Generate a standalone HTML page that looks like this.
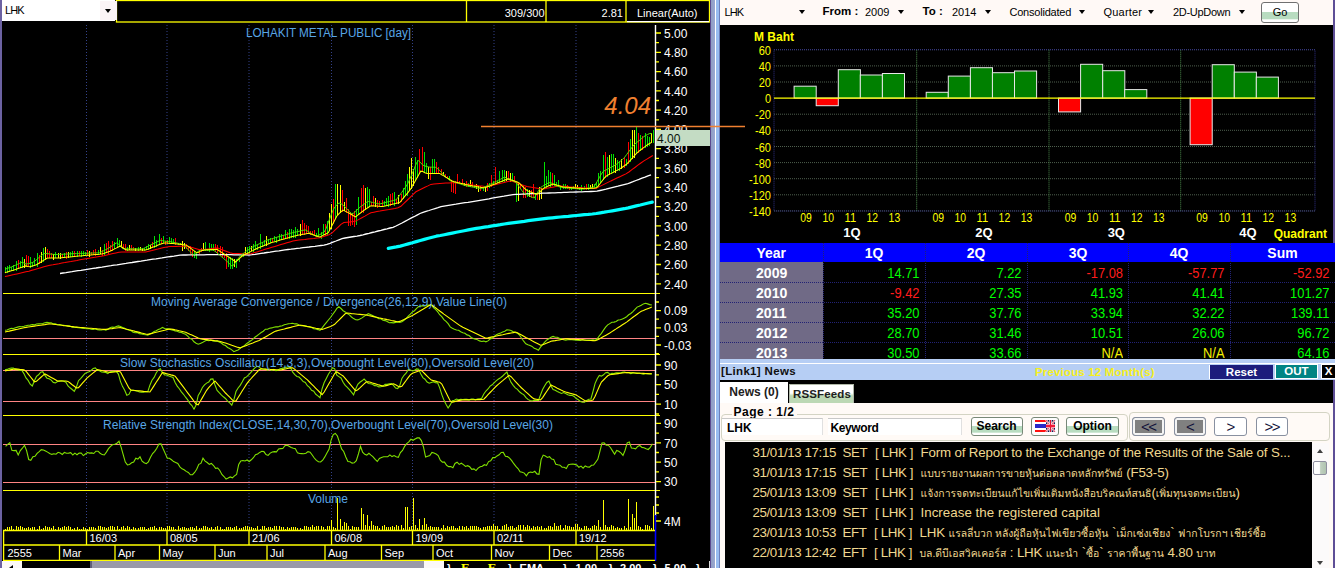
<!DOCTYPE html>
<html lang="th">
<head>
<meta charset="utf-8">
<title>LHK - LOHAKIT METAL PUBLIC</title>
<style>
html,body{margin:0;padding:0;background:#000;}
body{width:1335px;height:568px;overflow:hidden;position:relative;font-family:"Liberation Sans","Loma","Noto Sans Thai",sans-serif;font-size:11px;color:#000;}
.abs{position:absolute;}
.lsvg{position:absolute;left:0;top:0;overflow:visible;}
.bsvg{position:absolute;left:720px;top:0;}
#ledge{left:0;top:0;width:2px;height:568px;background:#6c62a2;}
#symbox{left:2px;top:0;width:113px;height:21px;background:#fff;}
#symbox span{position:absolute;left:3px;top:4px;font-size:11px;letter-spacing:-0.9px;}
.dd{position:absolute;width:0;height:0;border-left:3.5px solid transparent;border-right:3.5px solid transparent;border-top:4px solid #000;}
#symbtn{left:98px;top:1px;width:17px;height:19px;background:#fbf4f6;}
#sep{left:710px;top:0;width:10px;height:568px;background:linear-gradient(90deg,#5a4a90 0,#5a4a90 8%,#909cc4 10%,#98a8d0 48%,#ffffff 52%,#ffffff 61%,#98bcf0 64%,#98bcf0 94%,#404080 96%,#404080 100%);}
#redge{left:1333px;top:0;width:2px;height:568px;background:#5e4e96;}
#tb{left:720px;top:0;width:613px;height:25px;background:#fff9f6;}
#tb span{position:absolute;top:6px;font-size:11px;white-space:nowrap;}
#tb b{position:absolute;top:5px;font-size:11.5px;white-space:nowrap;}
#go{position:absolute;left:541px;top:1.8px;width:36px;height:19px;border:1px solid #707070;border-radius:3px;background:linear-gradient(#fff 0,#fff 46%,#b8dcc0 50%,#b8dcc0 84%,#fff 88%,#fff 100%);text-align:center;line-height:19px;font-size:11px;}
/* table */
#tbl{left:720px;top:242.5px;width:615px;height:117px;background:#000;}
#tbl .hd{position:absolute;left:0;top:0;width:615px;height:19.5px;background:#0000ff;}
#tbl .hd b{position:absolute;top:1px;font-size:15px;transform:scaleX(0.93);color:#fff;text-align:center;line-height:18px;}
#tbl .yr{position:absolute;left:0;width:102.5px;height:20px;background:#706a86;color:#fff;font-weight:bold;font-size:15px;text-align:center;line-height:21px;}
#tbl .yr span{display:inline-block;transform:scaleX(0.94);}
#tbl .v{position:absolute;font-size:15px;text-align:right;line-height:21px;height:20px;transform:scaleX(0.86);transform-origin:right center;}
.g{color:#00ff00;}.r{color:#ff1c1c;}.n{color:#f4f000;}
#tbl .hl{position:absolute;left:0;width:615px;height:0;border-top:1px dotted #222274;}
#tbl .vl{position:absolute;top:0;height:117px;width:0;border-left:1px dotted #222274;}
/* link bar */
#lbar{left:720px;top:359px;width:615px;height:21.3px;background:#b6cef4;}
#lbar:before{content:'';position:absolute;left:0;top:4px;width:615px;height:1px;background:#fff;}
#lbar .t{position:absolute;left:1px;top:5.5px;font-weight:bold;font-size:11.5px;color:#101010;letter-spacing:0.33px;white-space:nowrap;}
#lbar .p{position:absolute;left:315px;top:6.5px;font-weight:bold;font-size:11.5px;color:#f6f020;white-space:nowrap;letter-spacing:0.17px;}
#reset{position:absolute;left:490px;top:6px;width:63px;height:14px;border-left:1px solid #fff;margin-left:-1px;background:#1c1c7c;color:#fff;font-weight:bold;font-size:11.5px;text-align:center;line-height:14px;}
#out{position:absolute;left:555px;top:5.3px;width:41px;height:13px;background:#008484;border:1px solid #fff;color:#fff;font-weight:bold;font-size:11.5px;text-align:center;line-height:13.5px;}
#xb{position:absolute;left:600.5px;top:5.3px;width:14px;height:13px;background:#000;border:1px solid #fff;color:#fff;font-weight:bold;font-size:11.5px;text-align:center;line-height:13.5px;}
/* tabs */
#tab1{left:720px;top:381.5px;width:68px;height:22px;background:#fff;font-weight:bold;font-size:12px;color:#202020;text-align:center;line-height:21px;}
#tab2{left:788.5px;top:384px;width:65px;height:19px;border:1px solid #b0b8a8;border-bottom:none;box-sizing:border-box;background:linear-gradient(#fff 0,#fff 45%,#bcd8b4 60%,#bcd8b4 100%);font-weight:bold;font-size:11.5px;color:#202020;text-align:center;line-height:19px;letter-spacing:0.15px;padding-left:2px;}
#pnl{left:720px;top:402.5px;width:613px;height:39.5px;background:#fffaf6;}
.gb{position:absolute;border:1px solid #d4d4c4;border-radius:4px;}
#pg{position:absolute;left:11.5px;top:3px;background:#fffaf6;font-weight:bold;font-size:12px;padding:0 2px;line-height:12px;letter-spacing:0.5px;white-space:nowrap;}
.inp{position:absolute;top:15px;height:17.5px;background:#fff;border-top:1px solid #c8c8c8;border-right:1px solid #e0e0e0;font-weight:bold;font-size:12px;line-height:18px;box-sizing:border-box;}
.btn{position:absolute;top:14.6px;height:18.8px;border:1px solid #788878;border-radius:3px;box-sizing:border-box;background:linear-gradient(#fff 0,#fff 46%,#b8dcc0 50%,#b8dcc0 84%,#fff 88%,#fff 100%);font-weight:bold;font-size:12px;text-align:center;line-height:17.5px;}
.nb{position:absolute;top:14.6px;height:18.6px;width:32.5px;border:1px solid #8890a0;border-radius:3px;box-sizing:border-box;background:#fff;font-weight:normal;font-size:15px;letter-spacing:-1.5px;color:#101038;text-align:center;line-height:17px;}
.nb.gy{background:#808080;box-shadow:inset 0 0 0 2px #f4f4f4;}
/* news */
#nwrap{left:720px;top:441.5px;width:613px;height:127px;background:#fffaf6;}
#news{left:724.5px;top:441.7px;width:587px;height:126.3px;background:#000;color:#f0d890;font-size:13.33px;white-space:nowrap;overflow:hidden;}
#news div{position:absolute;left:28px;height:20px;line-height:20px;}
#news div span{position:absolute;top:0;}
#news i{font-style:normal;font-size:10.4px;letter-spacing:0;}
#sb{left:1311.5px;top:442.5px;width:17px;height:125.5px;background:#fcfafa;}
#sb i{position:absolute;left:5px;width:0;height:0;border-left:3.5px solid transparent;border-right:3.5px solid transparent;}
#thumb{position:absolute;left:1px;top:18.5px;width:14px;height:14px;border:1px solid #9090a0;border-radius:2px;box-sizing:border-box;background:linear-gradient(90deg,#fff 0,#fff 45%,#c0d0c0 55%,#b0c4b0 100%);}
/* bottom scrollbar */
#hsb{left:2px;top:561px;width:708px;height:7px;background:#000;overflow:hidden;}
</style>
</head>
<body>
<svg class="lsvg" width="720" height="568" viewBox="0 0 720 568" font-family="Liberation Sans, Arial, sans-serif">
<line x1="86.5" y1="25" x2="86.5" y2="530" stroke="#34428a" stroke-width="1" stroke-dasharray="1,2"/>
<line x1="167" y1="25" x2="167" y2="530" stroke="#34428a" stroke-width="1" stroke-dasharray="1,2"/>
<line x1="249" y1="25" x2="249" y2="530" stroke="#34428a" stroke-width="1" stroke-dasharray="1,2"/>
<line x1="331.5" y1="25" x2="331.5" y2="530" stroke="#34428a" stroke-width="1" stroke-dasharray="1,2"/>
<line x1="412.5" y1="25" x2="412.5" y2="530" stroke="#34428a" stroke-width="1" stroke-dasharray="1,2"/>
<line x1="494" y1="25" x2="494" y2="530" stroke="#34428a" stroke-width="1" stroke-dasharray="1,2"/>
<line x1="576" y1="25" x2="576" y2="530" stroke="#34428a" stroke-width="1" stroke-dasharray="1,2"/>
<line x1="3" y1="293.5" x2="660" y2="293.5" stroke="#ffff00" stroke-width="1.2"/>
<line x1="3" y1="354.5" x2="660" y2="354.5" stroke="#ffff00" stroke-width="1.2"/>
<line x1="3" y1="415.5" x2="660" y2="415.5" stroke="#ffff00" stroke-width="1.2"/>
<line x1="3" y1="490.5" x2="660" y2="490.5" stroke="#ffff00" stroke-width="1.2"/>
<line x1="3" y1="338.5" x2="655" y2="338.5" stroke="#ff8484" stroke-width="1"/>
<line x1="3" y1="370.5" x2="655" y2="370.5" stroke="#ff8484" stroke-width="1"/>
<line x1="3" y1="401.5" x2="655" y2="401.5" stroke="#ff8484" stroke-width="1"/>
<line x1="3" y1="444.5" x2="655" y2="444.5" stroke="#ff8484" stroke-width="1"/>
<line x1="3" y1="482.5" x2="655" y2="482.5" stroke="#ff8484" stroke-width="1"/>
<path d="M5.5 266.8V273.0M7.5 265.6V272.9M9.5 265.3V271.0M11.5 266.7V271.3M13.5 264.7V271.2M16.5 260.7V271.4M20.5 260.9V267.9M22.5 257.0V268.0M30.5 256.6V267.9M32.5 262.2V266.5M34.5 258.2V265.0M37.5 252.6V266.5M43.5 248.4V261.9M55.5 252.2V258.4M64.5 253.3V258.3M70.5 251.6V256.5M72.5 251.3V257.0M77.5 251.0V257.3M81.5 251.3V256.5M83.5 250.6V256.0M85.5 252.0V255.1M98.5 249.9V254.5M104.5 243.8V255.4M114.5 241.8V249.3M117.5 238.1V248.4M119.5 239.8V246.7M127.5 246.7V250.6M138.5 246.6V250.8M144.5 248.0V250.9M146.5 246.0V250.1M148.5 243.9V250.1M154.5 235.8V247.9M156.5 240.0V246.7M159.5 233.8V244.8M163.5 235.9V243.2M169.5 237.4V243.2M171.5 238.2V243.4M173.5 239.0V244.4M178.5 243.0V245.4M194.5 250.6V257.6M196.5 251.7V258.5M205.5 242.3V250.7M207.5 249.2V251.4M209.5 242.9V251.8M211.5 243.6V250.3M213.5 244.2V250.8M228.5 257.5V267.3M230.5 257.0V268.5M232.5 257.7V268.7M236.5 258.9V268.4M239.5 258.6V261.7M241.5 254.3V257.1M243.5 252.7V256.9M247.5 246.5V254.5M249.5 246.3V253.7M253.5 243.7V251.5M255.5 240.7V249.9M257.5 244.6V250.2M260.5 234.2V248.9M262.5 242.2V246.6M264.5 239.8V245.6M268.5 238.7V244.1M270.5 238.2V242.7M274.5 235.9V241.3M276.5 236.6V243.0M279.5 234.3V241.0M281.5 233.9V240.4M285.5 230.0V238.8M289.5 228.7V238.5M291.5 228.7V238.1M293.5 229.5V237.6M295.5 227.2V237.6M297.5 229.2V235.6M316.5 233.3V237.1M318.5 227.5V236.7M321.5 232.0V238.5M323.5 224.0V235.1M327.5 220.6V235.0M335.5 183.6V219.0M356.5 208.9V225.4M358.5 197.4V215.1M367.5 186.6V208.0M369.5 188.9V207.3M384.5 200.7V206.4M386.5 197.8V205.9M388.5 196.1V206.6M394.5 191.5V205.7M403.5 188.3V198.7M405.5 181.3V196.1M407.5 173.6V195.8M415.5 157.0V180.7M417.5 160.2V177.6M424.5 151.6V172.1M426.5 163.2V172.8M432.5 158.5V173.2M434.5 159.1V173.8M449.5 175.8V180.2M468.5 182.9V186.7M474.5 184.6V187.0M483.5 187.6V191.4M489.5 182.9V188.3M493.5 180.6V184.6M497.5 180.5V183.2M499.5 170.8V184.0M502.5 170.2V181.6M504.5 169.6V182.3M512.5 173.0V181.1M516.5 181.6V201.5M527.5 189.0V197.0M535.5 193.9V199.6M544.5 162.3V189.4M546.5 176.0V188.0M548.5 170.1V186.4M550.5 172.1V187.0M554.5 175.2V186.3M556.5 181.6V186.7M558.5 180.0V187.2M560.5 185.5V189.9M563.5 184.0V188.8M565.5 183.6V188.6M571.5 187.4V189.8M573.5 185.9V188.9M579.5 188.2V190.2M581.5 185.3V190.5M584.5 185.8V189.2M588.5 184.2V189.8M594.5 184.2V189.2M596.5 181.7V188.5M598.5 173.2V186.5M600.5 171.2V183.4M603.5 154.5V180.4M607.5 156.5V177.0M611.5 154.4V174.1M613.5 154.1V172.4M617.5 160.1V171.0M619.5 160.9V170.5M626.5 159.0V166.1M630.5 139.3V162.1M636.5 127.3V154.3M640.5 134.8V150.9M645.5 133.2V147.7M647.5 136.0V146.5M649.5 136.5V145.8M653.5 130.0V142.9" stroke="#00e000" stroke-width="1" fill="none" shape-rendering="crispEdges"/>
<path d="M18.5 259.6V268.5M26.5 255.3V266.5M28.5 255.8V266.5M39.5 255.4V264.4M47.5 248.9V258.1M49.5 251.0V257.8M51.5 252.7V257.7M62.5 253.7V258.1M66.5 251.9V259.0M74.5 251.1V256.2M79.5 251.0V256.4M87.5 250.1V256.2M91.5 251.7V254.9M93.5 249.7V255.1M95.5 249.1V256.2M102.5 249.5V256.0M106.5 242.8V252.7M108.5 240.6V253.5M110.5 244.6V250.8M112.5 241.3V251.4M123.5 244.3V249.2M125.5 244.1V251.2M131.5 245.1V250.1M133.5 247.2V250.4M152.5 241.9V248.1M161.5 238.0V243.9M165.5 240.6V244.8M167.5 240.0V243.7M175.5 238.2V244.8M186.5 244.4V248.8M188.5 245.6V251.1M190.5 246.1V253.5M192.5 249.6V257.2M199.5 250.2V253.8M201.5 248.2V251.7M215.5 243.7V252.4M217.5 245.0V253.7M220.5 246.2V255.8M222.5 246.9V257.0M224.5 253.8V258.2M226.5 252.7V268.5M272.5 237.7V242.3M283.5 234.8V239.1M287.5 232.1V238.5M302.5 220.3V234.5M304.5 223.0V234.9M306.5 224.5V234.4M308.5 226.1V233.7M310.5 230.8V234.8M312.5 230.7V235.1M314.5 229.5V234.9M325.5 224.4V235.5M333.5 198.7V223.8M342.5 190.2V211.5M346.5 198.0V213.2M348.5 208.9V226.4M350.5 212.9V226.3M352.5 213.2V225.4M354.5 210.5V226.6M361.5 187.7V212.6M363.5 184.5V213.0M371.5 201.8V206.0M373.5 195.6V205.8M377.5 199.5V207.9M379.5 200.7V205.8M382.5 200.2V206.0M390.5 194.0V206.2M392.5 193.3V203.9M396.5 199.2V204.1M401.5 194.1V201.9M419.5 148.5V173.5M422.5 147.4V171.3M430.5 167.1V179.7M436.5 162.0V174.4M438.5 166.7V173.7M441.5 168.7V174.0M445.5 174.4V177.0M447.5 175.8V178.0M451.5 181.2V192.4M453.5 181.7V192.8M455.5 181.4V193.8M457.5 173.8V183.2M459.5 180.5V184.4M462.5 179.4V184.2M466.5 180.5V187.3M472.5 181.9V186.8M480.5 186.0V191.0M487.5 183.1V191.1M491.5 175.0V187.4M495.5 167.0V184.3M508.5 171.1V179.4M514.5 175.8V182.4M520.5 184.2V189.2M523.5 185.9V197.8M525.5 187.0V197.7M531.5 189.5V198.4M533.5 184.3V198.2M537.5 192.6V200.1M552.5 172.9V185.8M567.5 184.7V189.2M569.5 188.0V190.4M586.5 184.3V189.5M605.5 152.4V177.7M624.5 156.8V168.0M628.5 142.2V164.2M638.5 132.7V152.5M642.5 135.8V149.8" stroke="#ff0000" stroke-width="1" fill="none" shape-rendering="crispEdges"/>
<path d="M24.5 258.5V267.6M41.5 251.6V262.8M45.5 247.0V259.9M53.5 253.6V259.5M58.5 252.9V257.9M60.5 252.6V258.9M68.5 251.8V257.6M89.5 250.9V256.8M100.5 246.7V253.8M121.5 240.7V246.3M129.5 244.9V250.1M135.5 247.5V250.6M140.5 246.9V249.5M142.5 247.5V251.3M150.5 244.6V249.4M180.5 243.0V245.2M182.5 241.4V250.6M184.5 243.4V249.1M203.5 242.6V250.5M234.5 258.5V267.3M245.5 246.8V255.2M251.5 245.7V251.0M266.5 236.2V246.4M300.5 223.5V236.1M329.5 213.1V231.3M331.5 204.4V229.2M337.5 184.1V215.0M340.5 184.9V212.9M344.5 201.8V210.7M365.5 187.6V210.2M375.5 198.2V206.5M398.5 195.1V204.2M409.5 167.1V190.9M411.5 158.4V189.0M413.5 169.3V185.8M428.5 167.1V179.1M443.5 171.7V175.0M464.5 183.0V186.4M470.5 180.4V186.6M476.5 183.6V189.4M478.5 186.2V191.6M485.5 187.1V192.0M506.5 170.9V181.1M510.5 173.1V181.5M518.5 183.3V201.3M529.5 190.1V197.0M539.5 187.2V199.9M541.5 187.7V199.0M575.5 183.8V189.2M577.5 184.5V189.3M590.5 184.5V188.6M592.5 184.0V189.0M609.5 155.2V175.0M615.5 158.3V172.8M621.5 159.1V169.1M632.5 130.1V159.1M634.5 130.0V158.0M651.5 133.3V143.3" stroke="#ffff00" stroke-width="1" fill="none" shape-rendering="crispEdges"/>
<polyline points="388.3,248.4 392.3,247.6 396.3,246.9 400.3,246.1 404.3,245.0 408.3,243.9 412.3,242.8 416.3,241.6 420.3,240.5 424.3,239.4 428.3,238.3 432.3,237.2 436.3,236.2 440.3,235.5 444.3,234.7 448.3,233.9 452.3,233.1 456.3,232.3 460.3,231.5 464.3,230.7 468.3,229.9 472.3,229.1 476.3,228.4 480.3,227.8 484.3,227.2 488.3,226.6 492.3,225.9 496.3,225.3 500.3,224.7 504.3,224.0 508.3,223.4 512.3,222.8 516.3,222.3 520.3,221.8 524.3,221.3 528.3,220.7 532.3,220.2 536.3,219.7 540.3,219.2 544.3,218.7 548.3,218.2 552.3,217.8 556.3,217.4 560.3,217.0 564.3,216.6 568.3,216.3 572.3,215.9 576.3,215.5 580.3,215.1 584.3,214.7 588.3,214.4 592.3,214.0 596.3,213.5 600.3,212.8 604.3,212.2 608.3,211.5 612.3,210.8 616.3,210.1 620.3,209.4 624.3,208.7 628.3,207.9 632.3,206.9 636.3,205.9 640.3,205.0 644.3,204.0 648.3,203.0 652.3,202.1" fill="none" stroke="#00ffff" stroke-width="3.2" stroke-linejoin="round" stroke-linecap="round"/>
<polyline points="60.0,273.5 63.0,273.0 66.0,272.6 69.0,272.1 72.0,271.7 75.0,271.2 78.0,270.7 81.0,270.3 84.0,269.8 87.0,269.4 90.0,268.9 93.0,268.4 96.0,268.0 99.0,267.5 102.0,267.1 105.0,266.6 108.0,266.1 111.0,265.7 114.0,265.2 117.0,264.8 120.0,264.3 123.0,263.8 126.0,263.4 129.0,262.9 132.0,262.5 135.0,262.0 138.0,261.5 141.0,261.1 144.0,260.6 147.0,260.2 150.0,259.7 153.0,259.2 156.0,258.8 159.0,258.3 162.0,257.9 165.0,257.4 168.0,256.9 171.0,256.5 174.0,256.1 177.0,255.6 180.0,255.2 183.0,255.0 186.0,255.0 189.0,254.9 192.0,254.9 195.0,254.9 198.0,254.8 201.0,254.8 204.0,254.8 207.0,254.7 210.0,254.7 213.0,254.7 216.0,254.7 219.0,254.6 222.0,254.6 225.0,254.6 228.0,254.7 231.0,254.7 234.0,254.8 237.0,254.8 240.0,254.9 243.0,254.9 246.0,254.9 249.0,255.0 252.0,254.7 255.0,254.3 258.0,253.8 261.0,253.4 264.0,253.0 267.0,252.5 270.0,252.1 273.0,251.6 276.0,251.2 279.0,250.8 282.0,250.3 285.0,249.9 288.0,249.5 291.0,249.2 294.0,248.8 297.0,248.4 300.0,248.1 303.0,247.7 306.0,247.3 309.0,247.0 312.0,246.6 315.0,246.3 318.0,245.9 321.0,245.5 324.0,245.2 327.0,244.4 330.0,243.3 333.0,242.1 336.0,241.0 339.0,239.8 342.0,238.7 345.0,238.0 348.0,237.5 351.0,237.0 354.0,236.5 357.0,236.1 360.0,235.5 363.0,234.8 366.0,234.0 369.0,233.3 372.0,232.5 375.0,231.8 378.0,231.0 381.0,230.3 384.0,229.5 387.0,228.8 390.0,228.0 393.0,227.3 396.0,226.0 399.0,224.5 402.0,223.0 405.0,221.4 408.0,219.8 411.0,218.2 414.0,216.7 417.0,215.1 420.0,213.5 423.0,212.4 426.0,211.4 429.0,210.5 432.0,209.5 435.0,208.6 438.0,207.7 441.0,206.7 444.0,206.1 447.0,205.6 450.0,205.1 453.0,204.6 456.0,204.2 459.0,203.7 462.0,203.2 465.0,202.7 468.0,202.3 471.0,201.8 474.0,201.3 477.0,200.8 480.0,200.3 483.0,199.8 486.0,199.3 489.0,198.8 492.0,198.2 495.0,197.7 498.0,197.2 501.0,196.7 504.0,196.2 507.0,195.6 510.0,195.1 513.0,194.6 516.0,194.4 519.0,194.3 522.0,194.1 525.0,194.0 528.0,193.9 531.0,193.7 534.0,193.6 537.0,193.5 540.0,193.3 543.0,193.2 546.0,193.1 549.0,193.0 552.0,192.9 555.0,192.8 558.0,192.7 561.0,192.6 564.0,192.4 567.0,192.3 570.0,192.2 573.0,192.1 576.0,192.0 579.0,191.9 582.0,191.8 585.0,191.7 588.0,191.6 591.0,191.5 594.0,191.4 597.0,191.2 600.0,190.5 603.0,189.8 606.0,189.1 609.0,188.3 612.0,187.6 615.0,186.9 618.0,186.2 621.0,185.4 624.0,184.7 627.0,184.0 630.0,182.8 633.0,181.7 636.0,180.5 639.0,179.4 642.0,178.2 645.0,177.1 648.0,175.9 651.0,174.8" fill="none" stroke="#ffffff" stroke-width="1.3" />
<polyline points="4.9,276.6 7.9,275.9 10.9,275.2 13.9,274.6 16.9,273.9 19.9,273.2 22.9,272.5 25.9,271.8 28.9,271.2 31.9,270.3 34.9,269.4 37.9,268.6 40.9,267.7 43.9,266.8 46.9,265.9 49.9,265.3 52.9,264.8 55.9,264.2 58.9,263.7 61.9,263.1 64.9,262.6 67.9,262.0 70.9,261.5 73.9,260.9 76.9,260.4 79.9,259.8 82.9,259.3 85.9,258.8 88.9,258.3 91.9,257.8 94.9,257.3 97.9,256.8 100.9,256.3 103.9,255.7 106.9,255.0 109.9,254.3 112.9,253.6 115.9,252.9 118.9,252.3 121.9,252.0 124.9,252.0 127.9,252.0 130.9,252.0 133.9,252.0 136.9,252.0 139.9,252.0 142.9,252.0 145.9,252.0 148.9,251.3 151.9,250.6 154.9,249.8 157.9,249.1 160.9,248.3 163.9,247.6 166.9,246.9 169.9,246.6 172.9,246.5 175.9,246.4 178.9,246.3 181.9,246.2 184.9,246.1 187.9,246.4 190.9,247.2 193.9,248.1 196.9,248.9 199.9,249.7 202.9,249.7 205.9,249.3 208.9,248.9 211.9,248.5 214.9,248.1 217.9,248.1 220.9,249.3 223.9,250.4 226.9,251.6 229.9,252.7 232.9,253.4 235.9,253.5 238.9,253.6 241.9,253.7 244.9,253.8 247.9,253.9 250.9,253.7 253.9,252.8 256.9,251.9 259.9,251.0 262.9,250.1 265.9,249.1 268.9,248.2 271.9,247.3 274.9,246.4 277.9,245.5 280.9,244.6 283.9,243.7 286.9,242.8 289.9,241.9 292.9,241.0 295.9,240.5 298.9,240.1 301.9,239.8 304.9,239.5 307.9,239.1 310.9,238.8 313.9,238.5 316.9,238.1 319.9,237.8 322.9,236.7 325.9,235.7 328.9,234.7 331.9,233.1 334.9,230.2 337.9,227.3 340.9,224.4 343.9,222.6 346.9,222.2 349.9,221.9 352.9,221.6 355.9,221.1 358.9,219.4 361.9,217.7 364.9,216.1 367.9,214.4 370.9,212.8 373.9,212.2 376.9,211.6 379.9,211.1 382.9,210.5 385.9,210.0 388.9,209.5 391.9,208.9 394.9,208.4 397.9,207.8 400.9,206.3 403.9,203.4 406.9,200.5 409.9,197.6 412.9,194.6 415.9,191.8 418.9,190.3 421.9,188.8 424.9,187.3 427.9,185.9 430.9,184.4 433.9,183.9 436.9,183.7 439.9,183.5 442.9,183.3 445.9,183.1 448.9,182.9 451.9,182.7 454.9,182.8 457.9,183.2 460.9,183.5 463.9,183.9 466.9,184.2 469.9,184.6 472.9,185.0 475.9,185.3 478.9,185.7 481.9,186.0 484.9,186.4 487.9,186.4 490.9,185.6 493.9,184.9 496.9,184.2 499.9,183.4 502.9,182.7 505.9,181.9 508.9,181.2 511.9,181.1 514.9,182.2 517.9,183.3 520.9,184.4 523.9,185.6 526.9,186.6 529.9,187.1 532.9,187.6 535.9,188.1 538.9,188.6 541.9,189.1 544.9,188.7 547.9,188.1 550.9,187.5 553.9,186.9 556.9,186.3 559.9,186.1 562.9,186.3 565.9,186.5 568.9,186.8 571.9,187.0 574.9,187.2 577.9,187.4 580.9,187.6 583.9,187.9 586.9,188.1 589.9,188.3 592.9,188.5 595.9,188.4 598.9,186.9 601.9,185.4 604.9,183.9 607.9,182.4 610.9,180.9 613.9,179.5 616.9,178.1 619.9,176.7 622.9,175.3 625.9,173.9 628.9,172.0 631.9,169.7 634.9,167.5 637.9,165.2 640.9,163.0 643.9,160.9 646.9,159.1 649.9,157.3 652.9,155.5" fill="none" stroke="#ff0000" stroke-width="1.05" />
<polyline points="5.0,269.2 7.1,268.5 9.2,267.7 11.3,267.0 13.4,266.1 15.5,265.2 17.6,264.3 19.7,263.3 21.8,262.4 23.9,262.9 26.0,264.1 28.1,263.8 30.2,263.2 32.3,262.6 34.4,261.4 36.5,259.6 38.6,257.9 40.7,256.1 42.8,254.4 44.9,253.4 47.0,253.6 49.1,253.9 51.2,254.1 53.3,254.3 55.4,254.6 57.5,254.5 59.6,254.4 61.7,254.3 63.8,254.2 65.9,254.1 68.0,254.0 70.1,253.9 72.2,253.8 74.3,253.7 76.4,253.6 78.5,253.5 80.6,253.4 82.7,253.4 84.8,253.3 86.9,253.2 89.0,253.2 91.1,253.1 93.2,253.0 95.3,252.9 97.4,252.9 99.5,252.7 101.6,251.7 103.7,250.7 105.8,249.7 107.9,248.6 110.0,247.2 112.1,245.8 114.2,244.4 116.3,243.0 118.4,243.9 120.5,246.2 122.6,248.6 124.7,248.8 126.8,248.8 128.9,248.8 131.0,248.8 133.1,248.8 135.2,248.8 137.3,248.8 139.4,248.8 141.5,248.8 143.6,248.4 145.7,247.4 147.8,246.3 149.9,245.3 152.0,244.3 154.1,243.3 156.2,242.3 158.3,241.3 160.4,240.3 162.5,240.7 164.6,241.1 166.7,241.3 168.8,241.6 170.9,241.8 173.0,242.3 175.1,242.7 177.2,243.1 179.3,243.6 181.4,244.0 183.5,244.7 185.6,246.9 187.7,249.1 189.8,251.3 191.9,253.5 194.0,255.3 196.1,253.2 198.2,251.3 200.3,250.2 202.4,250.2 204.5,250.2 206.6,250.2 208.7,250.2 210.8,250.2 212.9,250.2 215.0,251.2 217.1,253.0 219.2,254.7 221.3,256.5 223.4,258.3 225.5,260.1 227.6,261.8 229.7,263.9 231.8,266.1 233.9,264.8 236.0,261.8 238.1,258.7 240.2,256.1 242.3,254.3 244.4,252.6 246.5,250.9 248.6,249.5 250.7,248.2 252.8,246.9 254.9,245.8 257.0,244.9 259.1,243.9 261.2,243.0 263.3,242.0 265.4,241.0 267.5,240.1 269.6,239.4 271.7,238.8 273.8,238.2 275.9,237.5 278.0,236.9 280.1,236.3 282.2,235.7 284.3,235.1 286.4,234.5 288.5,233.9 290.6,233.2 292.7,232.7 294.8,232.2 296.9,231.8 299.0,231.3 301.1,230.8 303.2,230.3 305.3,229.9 307.4,231.1 309.5,232.4 311.6,233.6 313.7,234.8 315.8,236.1 317.9,235.7 320.0,234.5 322.1,233.2 324.2,232.0 326.3,228.1 328.4,222.1 330.5,216.6 332.6,211.2 334.7,207.1 336.8,205.1 338.9,203.0 341.0,203.6 343.1,205.3 345.2,207.1 347.3,209.2 349.4,211.4 351.5,213.6 353.6,213.2 355.7,211.2 357.8,209.2 359.9,207.3 362.0,205.7 364.1,204.1 366.2,202.5 368.3,201.5 370.4,201.9 372.5,202.4 374.6,202.9 376.7,203.4 378.8,203.9 380.9,203.7 383.0,203.1 385.1,202.6 387.2,202.0 389.3,201.5 391.4,201.0 393.5,200.4 395.6,199.9 397.7,198.0 399.8,195.1 401.9,192.2 404.0,189.3 406.1,186.4 408.2,182.8 410.3,178.0 412.4,173.3 414.5,168.0 416.6,162.6 418.7,160.6 420.8,162.9 422.9,165.2 425.0,166.0 427.1,166.6 429.2,167.1 431.3,167.2 433.4,167.2 435.5,167.3 437.6,168.6 439.7,170.6 441.8,172.7 443.9,174.8 446.0,176.9 448.1,179.0 450.2,180.7 452.3,181.4 454.4,182.1 456.5,182.8 458.6,183.4 460.7,184.1 462.8,184.8 464.9,185.5 467.0,186.0 469.1,186.4 471.2,186.8 473.3,187.2 475.4,187.7 477.5,188.1 479.6,188.5 481.7,188.6 483.8,187.2 485.9,186.3 488.0,185.3 490.1,184.4 492.2,183.4 494.3,182.4 496.4,181.3 498.5,180.2 500.6,179.2 502.7,178.1 504.8,177.0 506.9,178.4 509.0,179.5 511.1,180.3 513.2,181.1 515.3,181.9 517.4,184.4 519.5,187.3 521.6,190.2 523.7,192.9 525.8,194.0 527.9,195.1 530.0,196.1 532.1,197.2 534.2,198.0 536.3,194.5 538.4,190.9 540.5,187.6 542.6,186.2 544.7,185.0 546.8,183.8 548.9,182.7 551.0,182.8 553.1,184.0 555.2,185.2 557.3,186.1 559.4,186.9 561.5,187.5 563.6,187.6 565.7,187.8 567.8,188.0 569.9,188.2 572.0,188.3 574.1,188.5 576.2,188.7 578.3,188.9 580.4,189.1 582.5,189.0 584.6,188.7 586.7,188.4 588.8,188.1 590.9,187.8 593.0,187.7 595.1,185.0 597.2,181.4 599.3,177.7 601.4,174.0 603.5,171.2 605.6,170.2 607.7,169.1 609.8,168.0 611.9,166.9 614.0,165.7 616.1,164.5 618.2,162.9 620.3,161.2 622.4,159.5 624.5,157.4 626.6,154.6 628.7,151.8 630.8,149.0 632.9,146.2 635.0,143.8 637.1,142.2 639.2,140.6 641.3,138.8 643.4,137.0 645.5,135.5 647.6,134.5 649.7,133.5 651.8,133.5" fill="none" stroke="#50e000" stroke-width="1.0" />
<polyline points="4.9,272.7 7.0,272.1 9.1,271.4 11.2,270.8 13.3,270.2 15.4,269.5 17.5,268.7 19.6,268.0 21.7,267.2 23.8,266.4 25.9,265.9 28.0,266.4 30.1,266.7 32.2,266.0 34.3,265.4 36.4,264.8 38.5,263.5 40.6,262.2 42.7,260.9 44.8,259.6 46.9,258.3 49.0,258.0 51.1,258.0 53.2,258.0 55.3,258.0 57.4,258.0 59.5,257.9 61.6,257.7 63.7,257.5 65.8,257.3 67.9,257.1 70.0,256.9 72.1,256.7 74.2,256.5 76.3,256.3 78.4,256.1 80.5,255.9 82.6,255.7 84.7,255.5 86.8,255.3 88.9,255.2 91.0,255.0 93.1,254.8 95.2,254.6 97.3,254.4 99.4,254.3 101.5,254.1 103.6,253.6 105.7,252.8 107.8,252.0 109.9,251.2 112.0,250.2 114.1,249.1 116.2,248.1 118.3,247.0 120.4,246.1 122.5,247.5 124.6,249.0 126.7,250.0 128.8,250.0 130.9,250.0 133.0,250.0 135.1,250.0 137.2,250.0 139.3,250.0 141.4,250.0 143.5,250.0 145.6,250.0 147.7,249.3 149.8,248.5 151.9,247.6 154.0,246.8 156.1,246.0 158.2,245.1 160.3,244.3 162.4,243.5 164.5,243.0 166.6,243.1 168.7,243.3 170.8,243.4 172.9,243.5 175.0,243.7 177.1,243.9 179.2,244.2 181.3,244.4 183.4,244.7 185.5,244.9 187.6,245.9 189.7,247.5 191.8,249.1 193.9,250.7 196.0,252.2 198.1,252.5 200.2,251.4 202.3,250.4 204.4,249.9 206.5,249.8 208.6,249.7 210.7,249.6 212.8,249.5 214.9,249.4 217.0,249.3 219.1,250.7 221.2,252.1 223.3,253.5 225.4,254.9 227.5,256.3 229.6,257.7 231.7,259.1 233.8,260.5 235.9,261.6 238.0,259.8 240.1,257.9 242.2,256.0 244.3,254.8 246.4,253.7 248.5,252.7 250.6,251.6 252.7,250.6 254.8,249.5 256.9,248.5 259.0,247.6 261.1,246.8 263.2,245.9 265.3,245.1 267.4,244.3 269.5,243.4 271.6,242.6 273.7,242.0 275.8,241.4 277.9,240.8 280.0,240.1 282.1,239.5 284.2,238.9 286.3,238.3 288.4,237.7 290.5,237.0 292.6,236.4 294.7,235.9 296.8,235.5 298.9,235.1 301.0,234.7 303.1,234.3 305.2,233.9 307.3,233.5 309.4,233.6 311.5,234.3 313.6,235.0 315.7,235.7 317.8,236.4 319.9,236.9 322.0,235.9 324.1,234.8 326.2,233.8 328.3,232.7 330.4,228.7 332.5,224.5 334.6,220.4 336.7,216.2 338.8,213.8 340.9,211.8 343.0,210.1 345.1,211.1 347.2,212.1 349.3,213.2 351.4,214.5 353.5,215.8 355.6,216.9 357.7,215.2 359.8,213.5 361.9,211.9 364.0,210.3 366.1,208.9 368.2,207.5 370.3,206.1 372.4,205.7 374.5,205.9 376.6,206.0 378.7,206.2 380.8,206.4 382.9,206.4 385.0,206.0 387.1,205.5 389.2,205.0 391.3,204.5 393.4,204.0 395.5,203.6 397.6,203.1 399.7,202.6 401.8,200.0 403.9,197.4 406.0,194.9 408.1,192.3 410.2,189.7 412.3,186.2 414.4,182.4 416.5,178.7 418.6,175.0 420.7,171.2 422.8,171.6 424.9,172.7 427.0,173.4 429.1,173.4 431.2,173.4 433.3,173.4 435.4,173.4 437.5,173.4 439.6,173.4 441.7,174.7 443.8,175.9 445.9,177.2 448.0,178.4 450.1,179.7 452.2,180.9 454.3,181.7 456.4,182.2 458.5,182.7 460.6,183.2 462.7,183.7 464.8,184.3 466.9,184.8 469.0,185.3 471.1,185.6 473.2,186.0 475.3,186.3 477.4,186.7 479.5,187.1 481.6,187.4 483.7,187.8 485.8,187.4 487.9,186.6 490.0,185.9 492.1,185.1 494.2,184.3 496.3,183.5 498.4,182.6 500.5,181.7 502.6,180.9 504.7,180.0 506.8,179.2 508.9,178.9 511.0,179.7 513.1,180.4 515.2,181.2 517.3,182.0 519.4,183.2 521.5,185.3 523.6,187.4 525.7,189.5 527.8,190.9 529.9,191.7 532.0,192.5 534.1,193.3 536.2,194.1 538.3,193.5 540.4,191.4 542.5,189.3 544.6,187.6 546.7,186.7 548.8,185.8 550.9,184.9 553.0,184.0 555.1,184.6 557.2,185.2 559.3,185.8 561.4,186.4 563.5,186.9 565.6,187.2 567.7,187.3 569.8,187.5 571.9,187.7 574.0,187.8 576.1,188.0 578.2,188.2 580.3,188.3 582.4,188.5 584.5,188.7 586.6,188.6 588.7,188.4 590.8,188.3 592.9,188.2 595.0,188.0 597.1,187.4 599.2,184.7 601.3,182.0 603.4,179.3 605.5,176.6 607.6,175.2 609.7,174.1 611.8,173.1 613.9,172.0 616.0,170.9 618.1,169.9 620.2,168.6 622.3,167.2 624.4,165.8 626.5,164.3 628.6,162.2 630.7,159.9 632.8,157.5 634.9,155.2 637.0,152.9 639.1,151.1 641.2,149.5 643.3,147.9 645.4,146.3 647.5,144.7 649.6,143.5 651.7,142.4" fill="none" stroke="#ffff00" stroke-width="1.05" />
<polyline points="5.0,330.2 7.1,330.0 9.2,329.1 11.3,328.4 13.4,328.5 15.5,327.7 17.6,327.1 19.7,326.5 21.8,326.7 23.9,326.3 26.0,325.8 28.1,325.3 30.2,325.1 32.3,324.5 34.4,324.9 36.5,324.0 38.6,323.9 40.7,323.8 42.8,323.5 44.9,322.8 47.0,322.4 49.1,322.8 51.2,322.8 53.3,323.9 55.4,323.8 57.5,324.7 59.6,324.5 61.7,325.0 63.8,325.2 65.9,325.8 68.0,325.9 70.1,326.1 72.2,327.2 74.3,327.2 76.4,327.4 78.5,327.6 80.6,327.9 82.7,328.1 84.8,328.5 86.9,328.7 89.0,328.5 91.1,329.3 93.2,329.4 95.3,328.7 97.4,329.7 99.5,329.9 101.6,330.0 103.7,329.5 105.8,330.1 107.9,329.2 110.0,327.8 112.1,327.1 114.2,327.4 116.3,326.4 118.4,325.9 120.5,326.6 122.6,327.4 124.7,328.3 126.8,329.6 128.9,330.0 131.0,330.6 133.1,332.2 135.2,332.8 137.3,332.6 139.4,333.8 141.5,333.9 143.6,334.5 145.7,334.8 147.8,335.2 149.9,334.1 152.0,333.1 154.1,331.4 156.2,330.8 158.3,329.6 160.4,328.8 162.5,327.4 164.6,328.5 166.7,328.7 168.8,329.0 170.9,329.6 173.0,330.1 175.1,331.0 177.2,331.2 179.3,332.2 181.4,332.4 183.5,333.4 185.6,334.3 187.7,336.2 189.8,338.3 191.9,339.2 194.0,341.8 196.1,343.3 198.2,344.2 200.3,343.4 202.4,342.6 204.5,341.2 206.6,340.3 208.7,340.7 210.8,340.1 212.9,341.0 215.0,341.3 217.1,341.1 219.2,342.0 221.3,343.0 223.4,344.7 225.5,345.5 227.6,347.5 229.7,348.5 231.8,349.9 233.9,351.7 236.0,350.8 238.1,350.0 240.2,348.4 242.3,346.6 244.4,345.7 246.5,343.7 248.6,342.3 250.7,340.8 252.8,339.4 254.9,337.2 257.0,335.7 259.1,334.1 261.2,332.5 263.3,331.2 265.4,329.2 267.5,329.2 269.6,328.3 271.7,327.9 273.8,327.2 275.9,326.9 278.0,326.9 280.1,326.1 282.2,325.7 284.3,324.8 286.4,324.3 288.5,323.7 290.6,323.5 292.7,323.2 294.8,323.9 296.9,323.7 299.0,324.9 301.1,325.6 303.2,325.8 305.3,325.8 307.4,326.6 309.5,326.8 311.6,327.6 313.7,328.8 315.8,329.0 317.9,329.6 320.0,330.3 322.1,327.9 324.2,325.1 326.3,322.6 328.4,320.0 330.5,317.5 332.6,314.5 334.7,311.7 336.8,308.4 338.9,306.8 341.0,308.5 343.1,310.7 345.2,311.9 347.3,313.6 349.4,314.9 351.5,317.0 353.6,318.6 355.7,319.8 357.8,319.9 359.9,319.1 362.0,317.9 364.1,316.4 366.2,314.9 368.3,313.7 370.4,314.5 372.5,315.4 374.6,316.4 376.7,317.5 378.8,318.7 380.9,318.7 383.0,320.2 385.1,320.6 387.2,321.6 389.3,322.8 391.4,322.6 393.5,322.9 395.6,322.4 397.7,322.0 399.8,322.4 401.9,321.8 404.0,320.3 406.1,318.5 408.2,316.1 410.3,314.2 412.4,312.0 414.5,310.7 416.6,308.4 418.7,306.6 420.8,306.1 422.9,305.6 425.0,305.9 427.1,304.9 429.2,305.3 431.3,304.4 433.4,307.6 435.5,309.3 437.6,311.6 439.7,314.7 441.8,316.7 443.9,319.6 446.0,321.4 448.1,323.7 450.2,326.9 452.3,328.3 454.4,329.3 456.5,330.0 458.6,330.3 460.7,331.7 462.8,332.7 464.9,333.3 467.0,334.9 469.1,335.5 471.2,337.5 473.3,338.5 475.4,339.1 477.5,339.8 479.6,340.9 481.7,341.5 483.8,341.1 485.9,341.8 488.0,340.9 490.1,339.0 492.2,338.3 494.3,336.5 496.4,334.7 498.5,333.7 500.6,333.0 502.7,331.9 504.8,331.3 506.9,329.8 509.0,330.0 511.1,330.5 513.2,331.7 515.3,332.6 517.4,333.2 519.5,335.0 521.6,338.2 523.7,341.2 525.8,343.8 527.9,344.8 530.0,345.6 532.1,346.4 534.2,348.3 536.3,349.1 538.4,350.3 540.5,347.2 542.6,344.6 544.7,342.2 546.8,339.9 548.9,338.7 551.0,337.3 553.1,336.4 555.2,337.2 557.3,337.3 559.4,338.2 561.5,338.8 563.6,339.7 565.7,340.2 567.8,339.8 569.9,339.5 572.0,339.8 574.1,339.9 576.2,340.1 578.3,340.3 580.4,340.4 582.5,339.5 584.6,340.3 586.7,340.3 588.8,340.4 590.9,340.1 593.0,339.8 595.1,340.4 597.2,338.8 599.3,335.9 601.4,333.4 603.5,330.1 605.6,327.1 607.7,324.9 609.8,323.6 611.9,322.3 614.0,322.1 616.1,321.5 618.2,320.0 620.3,319.7 622.4,319.0 624.5,318.0 626.6,316.7 628.7,314.8 630.8,313.5 632.9,311.6 635.0,309.4 637.1,307.1 639.2,306.3 641.3,305.3 643.4,303.9 645.5,303.3 647.6,303.9 649.7,304.6 651.8,305.0" fill="none" stroke="#80e000" stroke-width="1.1" />
<polyline points="5.0,332.0 7.1,331.5 9.2,331.1 11.3,330.6 13.4,330.1 15.5,329.6 17.6,329.2 19.7,328.7 21.8,328.2 23.9,327.7 26.0,327.4 28.1,327.0 30.2,326.7 32.3,326.4 34.4,326.1 36.5,325.8 38.6,325.5 40.7,325.2 42.8,324.9 44.9,324.6 47.0,324.2 49.1,323.9 51.2,324.0 53.3,324.2 55.4,324.5 57.5,324.8 59.6,325.0 61.7,325.3 63.8,325.6 65.9,325.8 68.0,326.1 70.1,326.4 72.2,326.6 74.3,326.9 76.4,327.1 78.5,327.3 80.6,327.5 82.7,327.6 84.8,327.8 86.9,328.0 89.0,328.2 91.1,328.3 93.2,328.5 95.3,328.7 97.4,328.9 99.5,329.0 101.6,329.2 103.7,329.4 105.8,329.4 107.9,329.1 110.0,328.8 112.1,328.6 114.2,328.3 116.3,328.0 118.4,327.7 120.5,327.6 122.6,328.2 124.7,328.7 126.8,329.2 128.9,329.8 131.0,330.3 133.1,330.8 135.2,331.4 137.3,331.9 139.4,332.4 141.5,333.0 143.6,333.5 145.7,334.0 147.8,334.4 149.9,333.9 152.0,333.4 154.1,332.8 156.2,332.3 158.3,331.8 160.4,331.2 162.5,330.7 164.6,330.2 166.7,329.6 168.8,329.1 170.9,329.0 173.0,329.4 175.1,329.9 177.2,330.3 179.3,330.8 181.4,331.2 183.5,331.7 185.6,332.3 187.7,333.2 189.8,334.2 191.9,335.1 194.0,336.1 196.1,337.0 198.2,338.0 200.3,338.8 202.4,339.1 204.5,339.4 206.6,339.6 208.7,339.9 210.8,340.1 212.9,340.4 215.0,340.7 217.1,340.9 219.2,341.2 221.3,341.7 223.4,342.4 225.5,343.1 227.6,343.8 229.7,344.5 231.8,345.3 233.9,346.0 236.0,346.7 238.1,347.4 240.2,347.9 242.3,347.1 244.4,346.2 246.5,345.4 248.6,344.6 250.7,343.7 252.8,342.9 254.9,342.0 257.0,341.2 259.1,340.4 261.2,339.3 263.3,338.1 265.4,336.9 267.5,335.7 269.6,334.4 271.7,333.2 273.8,332.0 275.9,331.1 278.0,330.5 280.1,330.0 282.2,329.5 284.3,329.0 286.4,328.4 288.5,327.9 290.6,327.4 292.7,326.8 294.8,326.3 296.9,325.8 299.0,325.3 301.1,325.2 303.2,325.6 305.3,326.1 307.4,326.5 309.5,326.9 311.6,327.3 313.7,327.7 315.8,328.2 317.9,328.6 320.0,329.0 322.1,329.4 324.2,328.8 326.3,328.0 328.4,327.2 330.5,326.4 332.6,325.5 334.7,324.3 336.8,322.2 338.9,320.1 341.0,318.0 343.1,315.9 345.2,313.8 347.3,313.1 349.4,313.3 351.5,313.6 353.6,313.8 355.7,314.0 357.8,314.2 359.9,314.4 362.0,314.6 364.1,314.8 366.2,315.0 368.3,315.5 370.4,315.9 372.5,316.4 374.6,316.9 376.7,317.3 378.8,317.8 380.9,318.2 383.0,318.7 385.1,319.1 387.2,319.6 389.3,320.0 391.4,320.5 393.5,320.9 395.6,321.4 397.7,321.8 399.8,321.4 401.9,320.4 404.0,319.5 406.1,318.5 408.2,317.6 410.3,316.6 412.4,315.5 414.5,314.2 416.6,313.0 418.7,311.8 420.8,310.5 422.9,309.3 425.0,308.0 427.1,306.8 429.2,305.6 431.3,304.7 433.4,306.3 435.5,307.8 437.6,309.4 439.7,311.0 441.8,312.5 443.9,314.1 446.0,315.6 448.1,317.1 450.2,318.6 452.3,320.1 454.4,321.6 456.5,323.1 458.6,324.6 460.7,326.1 462.8,327.2 464.9,328.2 467.0,329.2 469.1,330.2 471.2,331.2 473.3,332.2 475.4,333.2 477.5,334.2 479.6,335.2 481.7,336.2 483.8,337.2 485.9,338.3 488.0,337.9 490.1,337.4 492.2,336.9 494.3,336.5 496.4,336.0 498.5,335.5 500.6,335.1 502.7,334.7 504.8,334.2 506.9,333.8 509.0,333.4 511.1,333.0 513.2,332.6 515.3,332.1 517.4,332.8 519.5,333.9 521.6,335.1 523.7,336.2 525.8,337.4 527.9,338.5 530.0,339.6 532.1,340.8 534.2,341.9 536.3,343.0 538.4,344.1 540.5,345.2 542.6,344.8 544.7,343.9 546.8,343.1 548.9,342.2 551.0,341.3 553.1,340.9 555.2,340.6 557.3,340.2 559.4,339.9 561.5,339.5 563.6,339.2 565.7,338.8 567.8,338.9 569.9,339.1 572.0,339.2 574.1,339.3 576.2,339.5 578.3,339.6 580.4,339.8 582.5,339.9 584.6,340.0 586.7,340.2 588.8,340.3 590.9,340.5 593.0,340.6 595.1,340.7 597.2,340.1 599.3,339.0 601.4,337.8 603.5,336.6 605.6,335.4 607.7,334.2 609.8,333.0 611.9,331.6 614.0,330.2 616.1,328.9 618.2,327.5 620.3,326.2 622.4,324.8 624.5,323.5 626.6,322.1 628.7,320.5 630.8,318.9 632.9,317.3 635.0,315.8 637.1,314.2 639.2,312.6 641.3,311.2 643.4,310.4 645.5,309.5 647.6,308.7 649.7,307.9 651.8,307.1" fill="none" stroke="#ffff00" stroke-width="1.1" />
<polyline points="5.0,369.9 7.1,369.4 9.2,368.5 11.3,368.0 13.4,368.1 15.5,369.6 17.6,369.6 19.7,370.1 21.8,370.2 23.9,373.6 26.0,377.9 28.1,380.4 30.2,384.2 32.3,386.0 34.4,380.7 36.5,376.4 38.6,374.8 40.7,372.2 42.8,371.7 44.9,375.4 47.0,378.2 49.1,378.8 51.2,380.1 53.3,382.4 55.4,383.0 57.5,381.5 59.6,381.1 61.7,380.7 63.8,381.3 65.9,382.2 68.0,386.0 70.1,387.8 72.2,389.5 74.3,391.3 76.4,387.0 78.5,380.7 80.6,378.6 82.7,376.2 84.8,373.7 86.9,372.4 89.0,371.8 91.1,370.5 93.2,368.4 95.3,367.9 97.4,370.3 99.5,370.8 101.6,372.0 103.7,372.2 105.8,372.4 107.9,373.6 110.0,371.7 112.1,371.4 114.2,371.2 116.3,371.3 118.4,374.1 120.5,381.6 122.6,386.6 124.7,390.3 126.8,395.2 128.9,394.4 131.0,390.3 133.1,390.3 135.2,390.8 137.3,391.1 139.4,392.0 141.5,392.2 143.6,392.3 145.7,391.6 147.8,391.7 149.9,385.2 152.0,380.2 154.1,377.4 156.2,373.0 158.3,369.8 160.4,368.7 162.5,373.0 164.6,374.9 166.7,375.0 168.8,376.0 170.9,376.7 173.0,377.5 175.1,382.5 177.2,386.1 179.3,388.7 181.4,391.9 183.5,394.3 185.6,397.2 187.7,399.9 189.8,403.4 191.9,405.5 194.0,409.2 196.1,405.0 198.2,395.4 200.3,392.0 202.4,387.5 204.5,384.8 206.6,383.1 208.7,382.1 210.8,379.1 212.9,378.9 215.0,385.0 217.1,390.4 219.2,392.7 221.3,394.9 223.4,396.8 225.5,398.5 227.6,401.1 229.7,402.8 231.8,405.1 233.9,399.7 236.0,391.5 238.1,388.0 240.2,385.4 242.3,381.8 244.4,378.0 246.5,376.9 248.6,374.8 250.7,372.7 252.8,370.1 254.9,367.9 257.0,366.3 259.1,366.9 261.2,368.8 263.3,369.3 265.4,369.2 267.5,370.1 269.6,369.3 271.7,370.4 273.8,369.4 275.9,370.6 278.0,370.2 280.1,368.7 282.2,368.4 284.3,367.8 286.4,367.3 288.5,366.8 290.6,367.8 292.7,372.2 294.8,374.7 296.9,376.4 299.0,377.1 301.1,379.1 303.2,381.6 305.3,382.4 307.4,385.7 309.5,387.4 311.6,390.3 313.7,391.3 315.8,394.3 317.9,395.9 320.0,397.7 322.1,388.7 324.2,382.5 326.3,378.4 328.4,374.3 330.5,371.0 332.6,367.8 334.7,368.8 336.8,375.2 338.9,376.6 341.0,378.0 343.1,382.3 345.2,385.4 347.3,387.3 349.4,389.7 351.5,392.2 353.6,394.9 355.7,388.9 357.8,384.3 359.9,382.3 362.0,380.8 364.1,379.0 366.2,381.2 368.3,383.5 370.4,383.7 372.5,384.2 374.6,385.6 376.7,385.8 378.8,386.9 380.9,386.7 383.0,386.1 385.1,384.3 387.2,384.4 389.3,383.9 391.4,383.5 393.5,385.3 395.6,388.1 397.7,388.6 399.8,385.5 401.9,378.4 404.0,375.3 406.1,373.2 408.2,369.7 410.3,370.0 412.4,371.0 414.5,370.4 416.6,368.9 418.7,369.3 420.8,373.9 422.9,377.6 425.0,379.2 427.1,382.0 429.2,383.2 431.3,382.4 433.4,381.8 435.5,382.8 437.6,382.9 439.7,387.9 441.8,394.6 443.9,400.0 446.0,404.3 448.1,408.0 450.2,404.9 452.3,400.8 454.4,400.3 456.5,399.1 458.6,399.8 460.7,399.3 462.8,399.5 464.9,399.3 467.0,399.4 469.1,400.1 471.2,399.1 473.3,399.1 475.4,399.8 477.5,399.1 479.6,398.9 481.7,398.2 483.8,394.0 485.9,391.0 488.0,389.0 490.1,386.1 492.2,384.8 494.3,382.7 496.4,380.6 498.5,379.0 500.6,377.7 502.7,376.0 504.8,373.9 506.9,372.0 509.0,377.9 511.1,382.4 513.2,385.3 515.3,387.9 517.4,389.3 519.5,391.8 521.6,393.5 523.7,394.6 525.8,397.3 527.9,399.4 530.0,400.6 532.1,401.0 534.2,400.4 536.3,400.2 538.4,400.4 540.5,395.0 542.6,389.5 544.7,385.8 546.8,382.5 548.9,381.0 551.0,386.0 553.1,389.5 555.2,390.3 557.3,391.5 559.4,392.5 561.5,393.4 563.6,392.6 565.7,393.6 567.8,394.8 569.9,395.4 572.0,395.2 574.1,396.4 576.2,398.6 578.3,399.8 580.4,401.4 582.5,402.1 584.6,402.2 586.7,400.4 588.8,399.3 590.9,399.0 593.0,391.5 595.1,383.4 597.2,378.7 599.3,375.5 601.4,376.1 603.5,374.8 605.6,372.7 607.7,372.4 609.8,374.2 611.9,373.4 614.0,373.6 616.1,372.8 618.2,372.9 620.3,373.0 622.4,372.4 624.5,372.0 626.6,372.8 628.7,372.8 630.8,373.6 632.9,372.9 635.0,373.0 637.1,373.5 639.2,373.0 641.3,373.7 643.4,374.2 645.5,373.8 647.6,373.6 649.7,373.9 651.8,373.9" fill="none" stroke="#80e000" stroke-width="1.1" />
<polyline points="5.0,371.0 7.1,370.5 9.2,370.1 11.3,369.6 13.4,369.2 15.5,368.9 17.6,369.1 19.7,369.4 21.8,369.6 23.9,369.9 26.0,371.2 28.1,373.9 30.2,376.5 32.3,379.1 34.4,381.8 36.5,381.2 38.6,379.4 40.7,377.5 42.8,375.7 44.9,373.9 47.0,375.0 49.1,376.2 51.2,377.4 53.3,378.6 55.4,379.8 57.5,381.0 59.6,381.0 61.7,381.0 63.8,381.0 65.9,381.0 68.0,381.4 70.1,383.0 72.2,384.7 74.3,386.3 76.4,387.9 78.5,387.7 80.6,385.3 82.7,382.9 84.8,380.6 86.9,378.2 89.0,376.3 91.1,374.6 93.2,372.9 95.3,371.3 97.4,369.6 99.5,370.0 101.6,370.5 103.7,371.0 105.8,371.5 107.9,372.0 110.0,372.5 112.1,372.2 114.2,371.9 116.3,371.6 118.4,371.2 120.5,371.9 122.6,375.9 124.7,379.9 126.8,383.9 128.9,387.9 131.0,390.1 133.1,390.3 135.2,390.5 137.3,390.7 139.4,390.9 141.5,391.1 143.6,391.4 145.7,391.6 147.8,391.8 149.9,392.0 152.0,388.9 154.1,385.6 156.2,382.3 158.3,379.1 160.4,375.8 162.5,372.5 164.6,373.1 166.7,373.7 168.8,374.3 170.9,374.9 173.0,375.4 175.1,376.1 177.2,378.9 179.3,381.7 181.4,384.4 183.5,387.2 185.6,390.0 187.7,392.8 189.8,395.6 191.9,398.4 194.0,401.3 196.1,404.1 198.2,404.8 200.3,401.2 202.4,397.6 204.5,394.0 206.6,390.3 208.7,387.6 210.8,385.4 212.9,383.2 215.0,381.0 217.1,383.4 219.2,385.8 221.3,388.2 223.4,390.7 225.5,393.0 227.6,395.1 229.7,397.2 231.8,399.3 233.9,401.4 236.0,400.9 238.1,397.5 240.2,394.2 242.3,390.8 244.4,387.5 246.5,384.1 248.6,381.3 250.7,379.0 252.8,376.7 254.9,374.4 257.0,372.1 259.1,369.8 261.2,368.9 263.3,369.0 265.4,369.1 267.5,369.2 269.6,369.4 271.7,369.5 273.8,369.6 275.9,369.8 278.0,369.9 280.1,370.0 282.2,369.6 284.3,369.1 286.4,368.7 288.5,368.3 290.6,367.9 292.7,367.7 294.8,369.4 296.9,371.2 299.0,372.9 301.1,374.7 303.2,376.4 305.3,378.2 307.4,379.9 309.5,382.0 311.6,384.1 313.7,386.2 315.8,388.3 317.9,390.4 320.0,392.5 322.1,394.6 324.2,392.0 326.3,388.3 328.4,384.6 330.5,381.0 332.6,377.3 334.7,373.6 336.8,371.8 338.9,373.2 341.0,374.6 343.1,376.0 345.2,378.3 347.3,380.9 349.4,383.4 351.5,385.9 353.6,388.4 355.7,390.9 357.8,389.7 359.9,387.8 362.0,385.8 364.1,383.9 366.2,382.0 368.3,381.7 370.4,382.3 372.5,383.0 374.6,383.6 376.7,384.2 378.8,384.9 380.9,385.5 383.0,386.1 385.1,385.9 387.2,385.4 389.3,384.8 391.4,384.3 393.5,383.8 395.6,384.8 397.7,385.9 399.8,386.9 401.9,386.3 404.0,383.4 406.1,380.5 408.2,377.6 410.3,374.8 412.4,373.3 414.5,372.5 416.6,371.7 418.7,370.9 420.8,370.1 422.9,371.9 425.0,374.0 427.1,376.1 429.2,378.2 431.3,380.1 433.4,380.6 435.5,381.1 437.6,381.7 439.7,382.2 441.8,384.1 443.9,388.3 446.0,392.5 448.1,396.7 450.2,400.9 452.3,402.2 454.4,401.6 456.5,401.1 458.6,400.6 460.7,400.1 462.8,400.0 464.9,399.9 467.0,399.9 469.1,399.8 471.2,399.8 473.3,399.7 475.4,399.7 477.5,399.6 479.6,399.6 481.7,399.5 483.8,399.2 485.9,397.0 488.0,394.7 490.1,392.5 492.2,390.3 494.3,388.1 496.4,386.0 498.5,384.2 500.6,382.4 502.7,380.7 504.8,378.9 506.9,377.2 509.0,375.4 511.1,376.7 513.2,379.0 515.3,381.3 517.4,383.6 519.5,385.9 521.6,388.0 523.7,389.9 525.8,391.8 527.9,393.7 530.0,395.6 532.1,397.5 534.2,398.9 536.3,399.2 538.4,399.6 540.5,399.9 542.6,397.6 544.7,394.4 546.8,391.3 548.9,388.1 551.0,385.0 553.1,386.1 555.2,387.1 557.3,388.2 559.4,389.2 561.5,390.3 563.6,391.3 565.7,392.0 567.8,392.6 569.9,393.2 572.0,393.8 574.1,394.4 576.2,395.1 578.3,396.4 580.4,397.8 582.5,399.1 584.6,400.4 586.7,401.2 588.8,400.8 590.9,400.5 593.0,400.1 595.1,396.3 597.2,391.4 599.3,386.5 601.4,382.1 603.5,380.0 605.6,377.9 607.7,375.8 609.8,374.8 611.9,374.5 614.0,374.2 616.1,373.9 618.2,373.6 620.3,373.3 622.4,373.0 624.5,372.7 626.6,372.5 628.7,372.6 630.8,372.7 632.9,372.8 635.0,373.0 637.1,373.1 639.2,373.2 641.3,373.3 643.4,373.4 645.5,373.5 647.6,373.6 649.7,373.7 651.8,373.8" fill="none" stroke="#ffff00" stroke-width="1.1" />
<polyline points="5.6,446.4 7.7,444.3 9.8,442.6 11.9,450.3 14.0,450.6 16.1,450.4 18.2,454.9 20.3,450.6 22.4,448.2 24.5,445.3 26.6,450.6 28.7,459.5 30.8,460.3 32.9,456.8 35.0,456.3 37.1,453.4 39.2,451.6 41.3,449.7 43.4,450.0 45.5,450.9 47.6,452.1 49.7,453.5 51.8,454.4 53.9,453.8 56.0,454.2 58.1,452.3 60.2,453.1 62.3,454.5 64.4,452.4 66.5,453.2 68.6,453.1 70.7,452.7 72.8,455.0 74.9,453.1 77.0,454.7 79.1,453.1 81.2,453.0 83.3,455.6 85.4,454.0 87.5,452.5 89.6,453.1 91.7,452.9 93.8,453.5 95.9,451.2 98.0,451.2 100.1,453.2 102.2,454.6 104.3,455.0 106.4,452.1 108.5,448.7 110.6,446.3 112.7,444.5 114.8,444.2 116.9,443.2 119.0,441.3 121.1,447.1 123.2,454.6 125.3,462.1 127.4,464.9 129.5,464.5 131.6,462.8 133.7,462.1 135.8,458.3 137.9,459.1 140.0,456.8 142.1,461.2 144.2,462.7 146.3,463.7 148.4,461.8 150.5,457.3 152.6,453.5 154.7,451.3 156.8,448.2 158.9,444.1 161.0,443.9 163.1,448.7 165.2,453.4 167.3,458.2 169.4,458.2 171.5,459.8 173.6,461.6 175.7,462.4 177.8,463.5 179.9,466.8 182.0,468.8 184.1,469.7 186.2,471.4 188.3,472.5 190.4,474.8 192.5,474.7 194.6,472.5 196.7,469.2 198.8,464.3 200.9,463.4 203.0,458.2 205.1,461.1 207.2,462.5 209.3,464.3 211.4,463.4 213.5,465.5 215.6,468.3 217.7,468.0 219.8,470.5 221.9,474.4 224.0,476.5 226.1,479.1 228.2,478.1 230.3,476.9 232.4,477.8 234.5,475.9 236.6,474.5 238.7,464.5 240.8,460.9 242.9,460.5 245.0,461.0 247.1,460.0 249.2,461.5 251.3,459.8 253.4,457.7 255.5,454.8 257.6,454.0 259.7,452.4 261.8,451.3 263.9,451.6 266.0,454.6 268.1,455.4 270.2,453.1 272.3,452.0 274.4,451.6 276.5,451.8 278.6,449.0 280.7,448.6 282.8,448.5 284.9,445.7 287.0,445.2 289.1,446.3 291.2,447.5 293.3,448.3 295.4,448.8 297.5,452.9 299.6,453.5 301.7,453.6 303.8,453.8 305.9,453.2 308.0,451.6 310.1,452.2 312.2,455.0 314.3,458.0 316.4,460.4 318.5,461.8 320.6,462.0 322.7,460.2 324.8,456.9 326.9,452.9 329.0,449.3 331.1,440.1 333.2,434.6 335.3,433.4 337.4,436.0 339.5,442.4 341.6,448.9 343.7,451.5 345.8,457.0 347.9,461.5 350.0,461.8 352.1,463.1 354.2,462.8 356.3,460.6 358.4,454.0 360.5,446.3 362.6,452.1 364.7,454.3 366.8,455.1 368.9,453.3 371.0,455.1 373.1,456.8 375.2,459.4 377.3,461.5 379.4,458.5 381.5,457.5 383.6,456.7 385.7,456.7 387.8,456.6 389.9,454.9 392.0,456.6 394.1,455.6 396.2,456.8 398.3,457.4 400.4,452.6 402.5,450.4 404.6,446.4 406.7,443.7 408.8,441.9 410.9,439.3 413.0,440.3 415.1,439.0 417.2,437.9 419.3,437.9 421.4,440.6 423.5,447.1 425.6,457.1 427.7,456.2 429.8,455.6 431.9,452.4 434.0,453.1 436.1,454.0 438.2,455.5 440.3,460.2 442.4,462.1 444.5,462.1 446.6,465.3 448.7,466.6 450.8,466.6 452.9,467.7 455.0,463.5 457.1,462.2 459.2,464.4 461.3,463.2 463.4,464.6 465.5,466.4 467.6,465.7 469.7,466.8 471.8,469.3 473.9,468.9 476.0,470.6 478.1,468.1 480.2,466.8 482.3,466.3 484.4,464.7 486.5,465.4 488.6,461.6 490.7,460.7 492.8,457.6 494.9,457.6 497.0,455.9 499.1,454.8 501.2,452.5 503.3,452.4 505.4,456.3 507.5,456.6 509.6,458.1 511.7,460.7 513.8,463.7 515.9,466.4 518.0,468.5 520.1,471.8 522.2,472.2 524.3,473.1 526.4,475.9 528.5,472.8 530.6,472.1 532.7,472.5 534.8,471.3 536.9,473.9 539.0,474.3 541.1,459.6 543.2,455.1 545.3,456.0 547.4,457.4 549.5,456.7 551.6,459.1 553.7,459.4 555.8,464.3 557.9,464.8 560.0,465.2 562.1,467.1 564.2,467.3 566.3,468.4 568.4,464.7 570.5,464.2 572.6,464.0 574.7,464.4 576.8,465.1 578.9,467.3 581.0,466.1 583.1,468.1 585.2,465.9 587.3,467.0 589.4,467.1 591.5,465.3 593.6,465.1 595.7,462.2 597.8,459.3 599.9,451.4 602.0,443.0 604.1,442.8 606.2,445.2 608.3,445.2 610.4,447.5 612.5,450.9 614.6,454.2 616.7,450.4 618.8,451.3 620.9,452.8 623.0,455.4 625.1,450.2 627.2,442.8 629.3,441.9 631.4,448.0 633.5,448.3 635.6,448.9 637.7,446.4 639.8,445.5 641.9,447.4 644.0,447.7 646.1,448.8 648.2,449.5 650.3,447.3 652.4,443.8" fill="none" stroke="#80e000" stroke-width="1.1" />
<path d="M5.5 528.5V530.5M7.5 526.5V530.5M9.5 526.5V530.5M11.5 526.0V530.5M13.5 528.5V530.5M16.5 525.5V530.5M18.5 527.0V530.5M20.5 526.0V530.5M22.5 526.5V530.5M24.5 528.0V530.5M26.5 527.5V530.5M28.5 527.0V530.5M30.5 528.0V530.5M32.5 527.0V530.5M34.5 527.0V530.5M37.5 528.5V530.5M39.5 526.0V530.5M41.5 528.5V530.5M43.5 527.5V530.5M45.5 526.0V530.5M47.5 527.0V530.5M49.5 527.0V530.5M51.5 527.5V530.5M53.5 526.0V530.5M55.5 528.5V530.5M58.5 527.0V530.5M60.5 527.5V530.5M62.5 527.0V530.5M64.5 525.5V530.5M66.5 527.0V530.5M68.5 526.0V530.5M70.5 526.5V530.5M72.5 528.5V530.5M74.5 528.0V530.5M77.5 527.0V530.5M79.5 528.5V530.5M81.5 528.5V530.5M83.5 527.0V530.5M85.5 528.0V530.5M87.5 528.5V530.5M89.5 526.5V530.5M91.5 527.0V530.5M93.5 526.5V530.5M95.5 528.0V530.5M98.5 526.0V530.5M100.5 526.0V530.5M102.5 527.0V530.5M104.5 527.0V530.5M106.5 528.0V530.5M108.5 526.5V530.5M110.5 526.0V530.5M112.5 525.5V530.5M114.5 526.5V530.5M117.5 525.5V530.5M119.5 528.5V530.5M121.5 527.0V530.5M123.5 526.0V530.5M125.5 527.5V530.5M127.5 525.5V530.5M129.5 527.0V530.5M131.5 528.5V530.5M133.5 527.0V530.5M135.5 527.5V530.5M138.5 527.5V530.5M140.5 527.0V530.5M142.5 527.0V530.5M144.5 527.0V530.5M146.5 528.5V530.5M148.5 527.5V530.5M150.5 526.5V530.5M152.5 526.5V530.5M154.5 526.0V530.5M156.5 528.0V530.5M159.5 527.0V530.5M161.5 527.0V530.5M163.5 527.5V530.5M165.5 527.5V530.5M167.5 525.5V530.5M169.5 525.5V530.5M171.5 527.0V530.5M173.5 527.0V530.5M175.5 528.5V530.5M178.5 525.5V530.5M180.5 527.5V530.5M182.5 526.5V530.5M184.5 527.0V530.5M186.5 527.5V530.5M188.5 527.5V530.5M190.5 527.0V530.5M192.5 526.5V530.5M194.5 528.0V530.5M196.5 526.0V530.5M199.5 527.5V530.5M201.5 527.5V530.5M203.5 525.5V530.5M205.5 526.0V530.5M207.5 527.0V530.5M209.5 528.0V530.5M211.5 527.0V530.5M213.5 528.5V530.5M215.5 526.5V530.5M217.5 525.5V530.5M220.5 527.0V530.5M222.5 528.5V530.5M224.5 528.5V530.5M226.5 527.0V530.5M228.5 527.0V530.5M230.5 527.0V530.5M232.5 528.0V530.5M234.5 527.0V530.5M236.5 525.5V530.5M239.5 528.0V530.5M241.5 527.5V530.5M243.5 526.5V530.5M245.5 525.5V530.5M247.5 525.5V530.5M249.5 526.5V530.5M251.5 527.0V530.5M253.5 527.5V530.5M255.5 528.0V530.5M257.5 525.5V530.5M260.5 528.5V530.5M262.5 525.5V530.5M264.5 525.5V530.5M266.5 528.0V530.5M268.5 526.5V530.5M270.5 527.0V530.5M272.5 528.0V530.5M274.5 525.5V530.5M276.5 526.0V530.5M279.5 525.5V530.5M281.5 527.0V530.5M283.5 526.5V530.5M285.5 528.5V530.5M287.5 526.5V530.5M289.5 528.0V530.5M291.5 527.0V530.5M293.5 527.0V530.5M295.5 527.0V530.5M297.5 528.0V530.5M300.5 527.5V530.5M302.5 528.5V530.5M304.5 525.5V530.5M306.5 526.0V530.5M308.5 527.0V530.5M310.5 527.0V530.5M312.5 525.0V530.5M314.5 526.5V530.5M316.5 526.0V530.5M318.5 526.0V530.5M321.5 525.5V530.5M323.5 527.0V530.5M325.5 528.5V530.5M327.5 526.0V530.5M329.5 525.5V530.5M331.5 520.0V530.5M333.5 526.5V530.5M335.5 527.5V530.5M337.5 498.4V530.5M340.5 519.0V530.5M342.5 526.0V530.5M344.5 522.0V530.5M346.5 523.0V530.5M348.5 526.0V530.5M350.5 528.5V530.5M352.5 525.5V530.5M354.5 527.0V530.5M356.5 527.0V530.5M358.5 526.5V530.5M361.5 508.0V530.5M363.5 514.0V530.5M365.5 525.0V530.5M367.5 515.0V530.5M369.5 526.0V530.5M371.5 521.0V530.5M373.5 525.0V530.5M375.5 525.5V530.5M377.5 526.0V530.5M379.5 527.5V530.5M382.5 525.5V530.5M384.5 525.0V530.5M386.5 526.5V530.5M388.5 526.5V530.5M390.5 526.5V530.5M392.5 525.5V530.5M394.5 526.5V530.5M396.5 525.0V530.5M398.5 525.5V530.5M401.5 525.0V530.5M403.5 527.5V530.5M405.5 506.8V530.5M407.5 506.8V530.5M409.5 527.0V530.5M411.5 526.0V530.5M413.5 497.6V530.5M415.5 525.0V530.5M417.5 528.0V530.5M419.5 519.0V530.5M422.5 525.0V530.5M424.5 518.0V530.5M426.5 524.0V530.5M428.5 527.0V530.5M430.5 525.5V530.5M432.5 526.5V530.5M434.5 527.0V530.5M436.5 527.0V530.5M438.5 526.5V530.5M441.5 528.0V530.5M443.5 524.5V530.5M445.5 527.5V530.5M447.5 526.0V530.5M449.5 527.0V530.5M451.5 526.0V530.5M453.5 525.5V530.5M455.5 527.5V530.5M457.5 527.5V530.5M459.5 525.5V530.5M462.5 525.5V530.5M464.5 526.5V530.5M466.5 525.5V530.5M468.5 528.0V530.5M470.5 526.0V530.5M472.5 526.0V530.5M474.5 525.5V530.5M476.5 525.5V530.5M478.5 527.0V530.5M480.5 528.0V530.5M483.5 526.5V530.5M485.5 526.5V530.5M487.5 525.5V530.5M489.5 526.0V530.5M491.5 525.5V530.5M493.5 524.0V530.5M495.5 526.0V530.5M497.5 525.5V530.5M499.5 528.5V530.5M502.5 526.0V530.5M504.5 525.0V530.5M506.5 524.0V530.5M508.5 527.0V530.5M510.5 525.5V530.5M512.5 526.0V530.5M514.5 527.5V530.5M516.5 526.5V530.5M518.5 525.0V530.5M520.5 525.0V530.5M523.5 525.0V530.5M525.5 526.5V530.5M527.5 525.0V530.5M529.5 526.0V530.5M531.5 528.0V530.5M533.5 525.5V530.5M535.5 527.0V530.5M537.5 525.5V530.5M539.5 527.0V530.5M541.5 526.0V530.5M544.5 527.5V530.5M546.5 527.5V530.5M548.5 526.0V530.5M550.5 525.5V530.5M552.5 526.5V530.5M554.5 523.0V530.5M556.5 525.5V530.5M558.5 526.0V530.5M560.5 525.0V530.5M563.5 527.5V530.5M565.5 525.0V530.5M567.5 526.0V530.5M569.5 526.0V530.5M571.5 527.0V530.5M573.5 527.0V530.5M575.5 524.0V530.5M577.5 524.0V530.5M579.5 526.5V530.5M581.5 527.5V530.5M584.5 526.0V530.5M586.5 526.0V530.5M588.5 527.5V530.5M590.5 527.5V530.5M592.5 526.0V530.5M594.5 524.5V530.5M596.5 526.0V530.5M598.5 520.0V530.5M600.5 526.5V530.5M603.5 499.5V530.5M605.5 525.0V530.5M607.5 527.0V530.5M609.5 527.0V530.5M611.5 524.5V530.5M613.5 526.0V530.5M615.5 527.5V530.5M617.5 527.0V530.5M619.5 527.5V530.5M621.5 528.0V530.5M624.5 526.0V530.5M626.5 528.0V530.5M628.5 499.0V530.5M630.5 526.5V530.5M632.5 514.0V530.5M634.5 518.0V530.5M636.5 501.8V530.5M638.5 526.0V530.5M640.5 527.0V530.5M642.5 528.5V530.5M645.5 525.0V530.5M647.5 525.0V530.5M649.5 525.5V530.5M651.5 527.5V530.5M653.5 506.0V530.5" stroke="#ffff00" stroke-width="1" fill="none" shape-rendering="crispEdges"/>
<line x1="655.5" y1="25" x2="655.5" y2="516" stroke="#ffffff" stroke-width="1.4"/>
<line x1="655.5" y1="515" x2="655.5" y2="561" stroke="#0000ff" stroke-width="1.6"/>
<path d="M656 33.0H661M656 42.6H659M656 52.3H661M656 61.9H659M656 71.6H661M656 81.2H659M656 90.9H661M656 100.5H659M656 110.2H661M656 119.8H659M656 129.4H661M656 139.1H659M656 148.7H661M656 158.4H659M656 168.0H661M656 177.7H659M656 187.3H661M656 197.0H659M656 206.6H661M656 216.3H659M656 225.9H661M656 235.5H659M656 245.2H661M656 254.8H659M656 264.5H661M656 274.1H659M656 283.8H661M656 302.0H659M656 310.6H661M656 319.2H659M656 327.8H661M656 336.4H659M656 345.0H661M656 353.6H659M656 365.0H661M656 374.8H659M656 384.6H661M656 394.4H659M656 404.2H661M656 414.0H659M656 423.4H661M656 433.1H659M656 442.8H661M656 452.5H659M656 462.2H661M656 471.9H659M656 481.6H661M656 497.0H659M656 505.0H659M656 513.0H659M656 521.0H661" stroke="#ffff00" stroke-width="1.3" fill="none"/>
<g fill="#ffffff" font-size="12px">
<text x="664" y="37.7">5.00</text>
<text x="664" y="57.0">4.80</text>
<text x="664" y="76.3">4.60</text>
<text x="664" y="95.6">4.40</text>
<text x="664" y="114.9">4.20</text>
<text x="664" y="134.2">4.00</text>
<text x="664" y="153.4">3.80</text>
<text x="664" y="172.7">3.60</text>
<text x="664" y="192.0">3.40</text>
<text x="664" y="211.3">3.20</text>
<text x="664" y="230.6">3.00</text>
<text x="664" y="249.9">2.80</text>
<text x="664" y="269.2">2.60</text>
<text x="664" y="288.5">2.40</text>
<text x="664" y="315.1">0.09</text>
<text x="664" y="332.1">0.03</text>
<text x="664" y="350.1">-0.03</text>
<text x="664" y="369.6">90</text>
<text x="664" y="389.2">50</text>
<text x="664" y="409.0">10</text>
<text x="664" y="428.0">90</text>
<text x="664" y="447.6">70</text>
<text x="664" y="466.6">50</text>
<text x="664" y="486.1">30</text>
<text x="664" y="525.6">4M</text>
</g>
<rect x="656" y="130" width="54" height="16" fill="#c4dcc4"/>
<text x="657" y="142.5" font-size="12px" fill="#0a140a">4.00</text>
<text x="651" y="113.5" font-size="24px" font-style="italic" fill="#f08030" text-anchor="end">4.04</text>
<g fill="#58a6e6" font-size="12px" text-anchor="middle">
<text x="328.5" y="37" textLength="165" lengthAdjust="spacingAndGlyphs">LOHAKIT METAL PUBLIC [day]</text>
<text x="329" y="306" textLength="356">Moving Average Convergence / Divergence(26,12,9),Value Line(0)</text>
<text x="327" y="367" textLength="414">Slow Stochastics Oscillator(14,3,3),Overbought Level(80),Oversold Level(20)</text>
<text x="328" y="428.5" textLength="450">Relative Strength Index(CLOSE,14,30,70),Overbought Level(70),Oversold Level(30)</text>
<text x="328" y="502.5">Volume</text>
</g>
<g stroke="#ffff00" stroke-width="1.3" fill="none">
<path d="M3 530.5H655M3 545H655M3.6 530.5V560.5M3 560.5H655"/>
<path d="M86.5 530.5V545M167 530.5V545M249 530.5V545M331.5 530.5V545M412.5 530.5V545M494 530.5V545M576 530.5V545M59.5 545V560.5M115 545V560.5M159.5 545V560.5M215 545V560.5M267 545V560.5M325 545V560.5M381.5 545V560.5M433 545V560.5M491.5 545V560.5M549.5 545V560.5M597 545V560.5"/>
</g>
<g fill="#ffffff" font-size="11px">
<text x="89.5" y="541.7">16/03</text>
<text x="170" y="541.7">08/05</text>
<text x="252" y="541.7">21/06</text>
<text x="334.5" y="541.7">06/08</text>
<text x="415.5" y="541.7">19/09</text>
<text x="497" y="541.7">02/11</text>
<text x="579" y="541.7">19/12</text>
<text x="7.5" y="557">2555</text>
<text x="62.5" y="557">Mar</text>
<text x="118" y="557">Apr</text>
<text x="162.5" y="557">May</text>
<text x="218" y="557">Jun</text>
<text x="270" y="557">Jul</text>
<text x="328" y="557">Aug</text>
<text x="384.5" y="557">Sep</text>
<text x="436" y="557">Oct</text>
<text x="494.5" y="557">Nov</text>
<text x="552.5" y="557">Dec</text>
<text x="600" y="557">2556</text>
</g>
<g stroke="#ffff00" stroke-width="1.3" fill="none"><rect x="116.5" y="0.5" width="593" height="21.5"/><path d="M466.5 0.5V22M546 0.5V22M626 0.5V22"/></g>
<line x1="627" y1="21.6" x2="709" y2="21.6" stroke="#ffffff" stroke-width="1.2"/>
<g fill="#ffffff" font-size="11px"><text x="544.5" y="17" text-anchor="end">309/300</text><text x="623" y="17" text-anchor="end">2.81</text><text x="637" y="17">Linear(Auto)</text></g>
</svg>
<div id="ledge" class="abs"></div>
<div id="symbox" class="abs"><span>LHK</span><div id="symbtn" class="abs"></div><div class="dd" style="left:102.5px;top:9px"></div></div>
<div id="hsb" class="abs">
  <div class="abs" style="left:0;top:0;width:20px;height:7px;background:#fbf8f8"></div>
  <div class="dd" style="left:6px;top:5px;border-top:none;border-bottom:4px solid #000;transform:rotate(-90deg)"></div>
  <div class="abs" style="left:87.5px;top:0;width:332px;height:7px;background:#9a9aa8;border-left:2px solid #606078;border-right:2px solid #50505c"></div>
  <div class="abs" style="left:422px;top:0;width:20px;height:7px;background:#fbf8f8"></div>
  <span class="abs" style="left:445px;top:0;font-size:11px;font-weight:bold;line-height:14px;color:#fff">}</span>
  <span class="abs" style="left:459px;top:0;font-size:11px;font-weight:bold;line-height:14px;color:#ff0;font-family:'Liberation Serif',serif;font-size:13px">E</span>
  <span class="abs" style="left:485.8px;top:0;font-size:11px;font-weight:bold;line-height:14px;color:#ff0;font-family:'Liberation Serif',serif;font-size:13px">E</span>
  <span class="abs" style="left:506px;top:0;font-size:11px;font-weight:bold;line-height:14px;color:#fff">}</span>
  <span class="abs" style="left:517.6px;top:0;font-size:11px;font-weight:bold;line-height:14px;color:#fff">EMA</span>
  <span class="abs" style="left:561px;top:0;font-size:11px;font-weight:bold;line-height:14px;color:#fff">}</span>
  <span class="abs" style="left:573.6px;top:0;font-size:11px;font-weight:bold;line-height:14px;color:#fff">1.00</span>
  <span class="abs" style="left:606.7px;top:0;font-size:11px;font-weight:bold;line-height:14px;color:#fff">}</span>
  <span class="abs" style="left:618px;top:0;font-size:11px;font-weight:bold;line-height:14px;color:#fff">2.00</span>
  <span class="abs" style="left:651px;top:0;font-size:11px;font-weight:bold;line-height:14px;color:#fff">}</span>
  <span class="abs" style="left:662.6px;top:0;font-size:11px;font-weight:bold;line-height:14px;color:#fff">5.00</span>
  <span class="abs" style="left:694px;top:0;font-size:11px;font-weight:bold;line-height:14px;color:#fff">}</span>
  <div class="abs" style="left:706.5px;top:0;width:1px;height:7px;background:#ddd"></div>
</div>
<div id="sep" class="abs"></div>
<div id="redge" class="abs"></div>

<div id="tb" class="abs">
  <span style="left:4.5px;letter-spacing:-0.9px">LHK</span><div class="dd" style="left:79px;top:10px"></div>
  <b style="left:102.5px">From :</b><span style="left:145px">2009</span><div class="dd" style="left:178px;top:10px"></div>
  <b style="left:202.5px">To :</b><span style="left:232px">2014</span><div class="dd" style="left:265px;top:10px"></div>
  <span style="left:289.5px;letter-spacing:-0.22px">Consolidated</span><div class="dd" style="left:359px;top:10px"></div>
  <span style="left:383.5px;letter-spacing:0.2px">Quarter</span><div class="dd" style="left:428px;top:10px"></div>
  <span style="left:453px;letter-spacing:-0.3px">2D-UpDown</span><div class="dd" style="left:519px;top:10px"></div>
  <div id="go">Go</div>
</div>
<svg class="bsvg" width="615" height="243" viewBox="720 0 615 243" font-family="Liberation Sans, Arial, sans-serif">
<line x1="774" y1="49.7" x2="1315" y2="49.7" stroke="#4e5e4e" stroke-width="1" stroke-dasharray="1,1"/>
<line x1="774" y1="65.9" x2="1315" y2="65.9" stroke="#4e5e4e" stroke-width="1" stroke-dasharray="1,1"/>
<line x1="774" y1="82.0" x2="1315" y2="82.0" stroke="#4e5e4e" stroke-width="1" stroke-dasharray="1,1"/>
<line x1="774" y1="114.2" x2="1315" y2="114.2" stroke="#4e5e4e" stroke-width="1" stroke-dasharray="1,1"/>
<line x1="774" y1="130.3" x2="1315" y2="130.3" stroke="#4e5e4e" stroke-width="1" stroke-dasharray="1,1"/>
<line x1="774" y1="146.5" x2="1315" y2="146.5" stroke="#4e5e4e" stroke-width="1" stroke-dasharray="1,1"/>
<line x1="774" y1="162.6" x2="1315" y2="162.6" stroke="#4e5e4e" stroke-width="1" stroke-dasharray="1,1"/>
<line x1="774" y1="178.7" x2="1315" y2="178.7" stroke="#4e5e4e" stroke-width="1" stroke-dasharray="1,1"/>
<line x1="774" y1="194.8" x2="1315" y2="194.8" stroke="#4e5e4e" stroke-width="1" stroke-dasharray="1,1"/>
<line x1="774" y1="210.9" x2="1315" y2="210.9" stroke="#4e5e4e" stroke-width="1" stroke-dasharray="1,1"/>
<line x1="916.7" y1="49.7" x2="916.7" y2="211" stroke="#4c8c4c" stroke-width="1" stroke-dasharray="1,1"/>
<line x1="1049" y1="49.7" x2="1049" y2="211" stroke="#4c8c4c" stroke-width="1" stroke-dasharray="1,1"/>
<line x1="1180.7" y1="49.7" x2="1180.7" y2="211" stroke="#4c8c4c" stroke-width="1" stroke-dasharray="1,1"/>
<rect x="774" y="49.7" width="541" height="161.3" fill="none" stroke="#303088" stroke-width="1" stroke-dasharray="1,1"/>
<text x="806.1" y="221.6" font-size="12px" fill="#ffff00" text-anchor="middle" textLength="11.6" lengthAdjust="spacingAndGlyphs">09</text>
<rect x="794.1" y="86.2" width="22.1" height="11.9" fill="#008000" stroke="#e8e8e8" stroke-width="1"/>
<text x="828.2" y="221.6" font-size="12px" fill="#ffff00" text-anchor="middle" textLength="11.6" lengthAdjust="spacingAndGlyphs">10</text>
<rect x="816.2" y="98.1" width="22.1" height="7.6" fill="#ff0000" stroke="#e8e8e8" stroke-width="1"/>
<text x="850.3" y="221.6" font-size="12px" fill="#ffff00" text-anchor="middle" textLength="11.6" lengthAdjust="spacingAndGlyphs">11</text>
<rect x="838.3" y="69.7" width="22.1" height="28.4" fill="#008000" stroke="#e8e8e8" stroke-width="1"/>
<text x="872.3" y="221.6" font-size="12px" fill="#ffff00" text-anchor="middle" textLength="11.6" lengthAdjust="spacingAndGlyphs">12</text>
<rect x="860.3" y="75.0" width="22.1" height="23.1" fill="#008000" stroke="#e8e8e8" stroke-width="1"/>
<text x="894.4" y="221.6" font-size="12px" fill="#ffff00" text-anchor="middle" textLength="11.6" lengthAdjust="spacingAndGlyphs">13</text>
<rect x="882.4" y="73.5" width="22.1" height="24.6" fill="#008000" stroke="#e8e8e8" stroke-width="1"/>
<text x="851.9" y="237" font-size="13px" font-weight="bold" fill="#ffffff" text-anchor="middle">1Q</text>
<text x="938.2" y="221.6" font-size="12px" fill="#ffff00" text-anchor="middle" textLength="11.6" lengthAdjust="spacingAndGlyphs">09</text>
<rect x="926.2" y="92.3" width="22.1" height="5.8" fill="#008000" stroke="#e8e8e8" stroke-width="1"/>
<text x="960.3" y="221.6" font-size="12px" fill="#ffff00" text-anchor="middle" textLength="11.6" lengthAdjust="spacingAndGlyphs">10</text>
<rect x="948.3" y="76.1" width="22.1" height="22.0" fill="#008000" stroke="#e8e8e8" stroke-width="1"/>
<text x="982.4" y="221.6" font-size="12px" fill="#ffff00" text-anchor="middle" textLength="11.6" lengthAdjust="spacingAndGlyphs">11</text>
<rect x="970.4" y="67.7" width="22.1" height="30.4" fill="#008000" stroke="#e8e8e8" stroke-width="1"/>
<text x="1004.4" y="221.6" font-size="12px" fill="#ffff00" text-anchor="middle" textLength="11.6" lengthAdjust="spacingAndGlyphs">12</text>
<rect x="992.4" y="72.7" width="22.1" height="25.4" fill="#008000" stroke="#e8e8e8" stroke-width="1"/>
<text x="1026.5" y="221.6" font-size="12px" fill="#ffff00" text-anchor="middle" textLength="11.6" lengthAdjust="spacingAndGlyphs">13</text>
<rect x="1014.5" y="71.0" width="22.1" height="27.1" fill="#008000" stroke="#e8e8e8" stroke-width="1"/>
<text x="984.0" y="237" font-size="13px" font-weight="bold" fill="#ffffff" text-anchor="middle">2Q</text>
<text x="1070.5" y="221.6" font-size="12px" fill="#ffff00" text-anchor="middle" textLength="11.6" lengthAdjust="spacingAndGlyphs">09</text>
<rect x="1058.5" y="98.1" width="22.1" height="13.8" fill="#ff0000" stroke="#e8e8e8" stroke-width="1"/>
<text x="1092.6" y="221.6" font-size="12px" fill="#ffff00" text-anchor="middle" textLength="11.6" lengthAdjust="spacingAndGlyphs">10</text>
<rect x="1080.6" y="64.3" width="22.1" height="33.8" fill="#008000" stroke="#e8e8e8" stroke-width="1"/>
<text x="1114.7" y="221.6" font-size="12px" fill="#ffff00" text-anchor="middle" textLength="11.6" lengthAdjust="spacingAndGlyphs">11</text>
<rect x="1102.7" y="70.7" width="22.1" height="27.4" fill="#008000" stroke="#e8e8e8" stroke-width="1"/>
<text x="1136.7" y="221.6" font-size="12px" fill="#ffff00" text-anchor="middle" textLength="11.6" lengthAdjust="spacingAndGlyphs">12</text>
<rect x="1124.7" y="89.6" width="22.1" height="8.5" fill="#008000" stroke="#e8e8e8" stroke-width="1"/>
<text x="1158.8" y="221.6" font-size="12px" fill="#ffff00" text-anchor="middle" textLength="11.6" lengthAdjust="spacingAndGlyphs">13</text>
<text x="1116.3" y="237" font-size="13px" font-weight="bold" fill="#ffffff" text-anchor="middle">3Q</text>
<text x="1202.1" y="221.6" font-size="12px" fill="#ffff00" text-anchor="middle" textLength="11.6" lengthAdjust="spacingAndGlyphs">09</text>
<rect x="1190.1" y="98.1" width="22.1" height="46.6" fill="#ff0000" stroke="#e8e8e8" stroke-width="1"/>
<text x="1224.2" y="221.6" font-size="12px" fill="#ffff00" text-anchor="middle" textLength="11.6" lengthAdjust="spacingAndGlyphs">10</text>
<rect x="1212.2" y="64.7" width="22.1" height="33.4" fill="#008000" stroke="#e8e8e8" stroke-width="1"/>
<text x="1246.3" y="221.6" font-size="12px" fill="#ffff00" text-anchor="middle" textLength="11.6" lengthAdjust="spacingAndGlyphs">11</text>
<rect x="1234.3" y="72.1" width="22.1" height="26.0" fill="#008000" stroke="#e8e8e8" stroke-width="1"/>
<text x="1268.3" y="221.6" font-size="12px" fill="#ffff00" text-anchor="middle" textLength="11.6" lengthAdjust="spacingAndGlyphs">12</text>
<rect x="1256.3" y="77.1" width="22.1" height="21.0" fill="#008000" stroke="#e8e8e8" stroke-width="1"/>
<text x="1290.4" y="221.6" font-size="12px" fill="#ffff00" text-anchor="middle" textLength="11.6" lengthAdjust="spacingAndGlyphs">13</text>
<text x="1247.9" y="237" font-size="13px" font-weight="bold" fill="#ffffff" text-anchor="middle">4Q</text>
<line x1="774" y1="98.1" x2="1315" y2="98.1" stroke="#ffff00" stroke-width="1.4"/>
<text x="771" y="54.7" font-size="12px" fill="#ffff00" text-anchor="end" textLength="12.3" lengthAdjust="spacingAndGlyphs">60</text>
<text x="771" y="70.9" font-size="12px" fill="#ffff00" text-anchor="end" textLength="12.3" lengthAdjust="spacingAndGlyphs">40</text>
<text x="771" y="87.0" font-size="12px" fill="#ffff00" text-anchor="end" textLength="12.3" lengthAdjust="spacingAndGlyphs">20</text>
<text x="771" y="103.1" font-size="12px" fill="#ffff00" text-anchor="end" textLength="6.1" lengthAdjust="spacingAndGlyphs">0</text>
<text x="771" y="119.2" font-size="12px" fill="#ffff00" text-anchor="end" textLength="16.0" lengthAdjust="spacingAndGlyphs">-20</text>
<text x="771" y="135.3" font-size="12px" fill="#ffff00" text-anchor="end" textLength="16.0" lengthAdjust="spacingAndGlyphs">-40</text>
<text x="771" y="151.5" font-size="12px" fill="#ffff00" text-anchor="end" textLength="16.0" lengthAdjust="spacingAndGlyphs">-60</text>
<text x="771" y="167.6" font-size="12px" fill="#ffff00" text-anchor="end" textLength="16.0" lengthAdjust="spacingAndGlyphs">-80</text>
<text x="771" y="183.7" font-size="12px" fill="#ffff00" text-anchor="end" textLength="22.1" lengthAdjust="spacingAndGlyphs">-100</text>
<text x="771" y="199.8" font-size="12px" fill="#ffff00" text-anchor="end" textLength="22.1" lengthAdjust="spacingAndGlyphs">-120</text>
<text x="771" y="215.9" font-size="12px" fill="#ffff00" text-anchor="end" textLength="22.1" lengthAdjust="spacingAndGlyphs">-140</text>
<text x="754" y="41" font-size="12px" font-weight="bold" fill="#ffff00">M Baht</text>
<text x="1327" y="238" font-size="12px" font-weight="bold" fill="#ffff00" text-anchor="end">Quadrant</text>
</svg>

<div id="tbl" class="abs">
  <div class="hd">
    <b style="left:0;width:102.5px">Year</b><b style="left:102.5px;width:102px">1Q</b><b style="left:204.5px;width:102px">2Q</b><b style="left:306.5px;width:102px">3Q</b><b style="left:408px;width:102px">4Q</b><b style="left:510px;width:105px">Sum</b>
  </div>
  <div class="yr" style="top:19.5px"><span>2009</span></div><div class="yr" style="top:39.5px"><span>2010</span></div><div class="yr" style="top:59.5px"><span>2011</span></div><div class="yr" style="top:79.5px"><span>2012</span></div><div class="yr" style="top:99.5px;height:17.5px"><span>2013</span></div>
  <div class="v g" style="left:102.5px;width:96.5px;top:19.5px">14.71</div>
  <div class="v g" style="left:204.5px;width:96.5px;top:19.5px">7.22</div>
  <div class="v r" style="left:306.5px;width:96.0px;top:19.5px">-17.08</div>
  <div class="v r" style="left:408px;width:96.5px;top:19.5px">-57.77</div>
  <div class="v r" style="left:510px;width:99.5px;top:19.5px">-52.92</div>
  <div class="v r" style="left:102.5px;width:96.5px;top:39.5px">-9.42</div>
  <div class="v g" style="left:204.5px;width:96.5px;top:39.5px">27.35</div>
  <div class="v g" style="left:306.5px;width:96.0px;top:39.5px">41.93</div>
  <div class="v g" style="left:408px;width:96.5px;top:39.5px">41.41</div>
  <div class="v g" style="left:510px;width:99.5px;top:39.5px">101.27</div>
  <div class="v g" style="left:102.5px;width:96.5px;top:59.5px">35.20</div>
  <div class="v g" style="left:204.5px;width:96.5px;top:59.5px">37.76</div>
  <div class="v g" style="left:306.5px;width:96.0px;top:59.5px">33.94</div>
  <div class="v g" style="left:408px;width:96.5px;top:59.5px">32.22</div>
  <div class="v g" style="left:510px;width:99.5px;top:59.5px">139.11</div>
  <div class="v g" style="left:102.5px;width:96.5px;top:79.5px">28.70</div>
  <div class="v g" style="left:204.5px;width:96.5px;top:79.5px">31.46</div>
  <div class="v g" style="left:306.5px;width:96.0px;top:79.5px">10.51</div>
  <div class="v g" style="left:408px;width:96.5px;top:79.5px">26.06</div>
  <div class="v g" style="left:510px;width:99.5px;top:79.5px">96.72</div>
  <div class="v g" style="left:102.5px;width:96.5px;top:99.5px">30.50</div>
  <div class="v g" style="left:204.5px;width:96.5px;top:99.5px">33.66</div>
  <div class="v n" style="left:306.5px;width:96.0px;top:99.5px">N/A</div>
  <div class="v n" style="left:408px;width:96.5px;top:99.5px">N/A</div>
  <div class="v g" style="left:510px;width:99.5px;top:99.5px">64.16</div>
  <div class="hl" style="top:39.5px"></div><div class="hl" style="top:59.5px"></div><div class="hl" style="top:79.5px"></div><div class="hl" style="top:99.5px"></div>
  <div class="vl" style="left:102.5px"></div><div class="vl" style="left:204.5px"></div><div class="vl" style="left:306.5px"></div><div class="vl" style="left:408px"></div><div class="vl" style="left:510px"></div>
</div>

<div id="lbar" class="abs"><span class="t">[Link1] News</span><span class="p">Previous 12 Month(s)</span><div id="reset">Reset</div><div id="out">OUT</div><div id="xb">X</div></div>
<div id="tab1" class="abs">News (0)</div>
<div id="tab2" class="abs">RSSFeeds</div>
<div id="pnl" class="abs">
  <div class="gb" style="left:1px;top:11px;width:405px;height:25px"></div>
  <div class="gb" style="left:409px;top:9.5px;width:199px;height:26.5px"></div>
  <div id="pg">Page : 1/2</div>
  <div class="inp" style="left:2px;width:101px;padding-left:5px">LHK</div>
  <div class="inp" style="left:107.5px;width:134px;padding-left:3px;letter-spacing:-0.4px">Keyword</div>
  <div class="btn" style="left:250.5px;width:52px">Search</div>
  <div class="btn" style="left:311px;width:28px;background:#fdfdfd">
    <svg width="21" height="12" viewBox="0 0 21 12" style="position:absolute;left:3px;top:2px">
      <rect x="0" y="0" width="11" height="12" fill="#ff1010"/><rect x="0" y="2" width="11" height="8" fill="#fff"/><rect x="0" y="4" width="11" height="4" fill="#2828c8"/>
      <g transform="translate(11,0)"><rect x="0" y="0" width="9" height="12" fill="#181850"/><path d="M0 0L9 12M9 0L0 12" stroke="#fff" stroke-width="2"/><path d="M0 0L9 12M9 0L0 12" stroke="#e01030" stroke-width="0.8"/><path d="M4.5 0V12" stroke="#fff" stroke-width="2.4"/><path d="M0 6H9" stroke="#fff" stroke-width="4"/><path d="M4.5 0V12" stroke="#e01030" stroke-width="1.2"/><path d="M0 6H9" stroke="#f01838" stroke-width="2.8"/></g>
    </svg>
  </div>
  <div class="btn" style="left:346px;width:53px">Option</div>
  <div class="nb gy" style="left:412px">&lt;&lt;</div>
  <div class="nb gy" style="left:453.5px">&lt;</div>
  <div class="nb" style="left:494px">&gt;</div>
  <div class="nb" style="left:535.5px">&gt;&gt;</div>
</div>
<div id="nwrap" class="abs"></div>
<div id="news" class="abs">
  <div style="top:1.8px"><span style="left:0;letter-spacing:-0.39px">31/01/13 17:15</span><span style="left:90px;letter-spacing:-0.4px">SET</span><span style="left:122.5px;letter-spacing:-0.39px">[ LHK ]</span><span style="left:168px;letter-spacing:-0.17px">Form of Report to the Exchange of the Results of the Sale of S...</span></div>
  <div style="top:21.8px"><span style="left:0;letter-spacing:-0.39px">31/01/13 17:15</span><span style="left:90px;letter-spacing:-0.4px">SET</span><span style="left:122.5px;letter-spacing:-0.39px">[ LHK ]</span><span style="left:168px;letter-spacing:-0.17px"><i>แบบรายงานผลการขายหุ้นต่อตลาดหลักทรัพย์</i> (F53-5)</span></div>
  <div style="top:41.8px"><span style="left:0;letter-spacing:-0.39px">25/01/13 13:09</span><span style="left:90px;letter-spacing:-0.4px">SET</span><span style="left:122.5px;letter-spacing:-0.39px">[ LHK ]</span><span style="left:168px;letter-spacing:-0.17px"><i>แจ้งการจดทะเบียนแก้ไขเพิ่มเติมหนังสือบริคณห์สนธิ</i>(<i>เพิ่มทุนจดทะเบียน</i>)</span></div>
  <div style="top:61.8px"><span style="left:0;letter-spacing:-0.39px">25/01/13 13:09</span><span style="left:90px;letter-spacing:-0.4px">SET</span><span style="left:122.5px;letter-spacing:-0.39px">[ LHK ]</span><span style="left:168px;letter-spacing:0.03px">Increase the registered capital</span></div>
  <div style="top:81.8px"><span style="left:0;letter-spacing:-0.39px">23/01/13 10:53</span><span style="left:90px;letter-spacing:-0.4px">EFT</span><span style="left:121.5px;letter-spacing:-0.39px">[ LHK ]</span><span style="left:167px;letter-spacing:-0.17px">LHK <i>แรลลี่บวก หลังผู้ถือหุ้นไฟเขียวซื้อหุ้น</i> `<i>เม็กเซ่งเชียง</i>` <i>ฟากโบรกฯ เชียร์ซื้อ</i></span></div>
  <div style="top:101.8px"><span style="left:0;letter-spacing:-0.39px">22/01/13 12:42</span><span style="left:90px;letter-spacing:-0.4px">EFT</span><span style="left:121.5px;letter-spacing:-0.39px">[ LHK ]</span><span style="left:167px;letter-spacing:-0.17px"><i>บล.ดีบีเอสวิคเคอร์ส</i> : LHK <i>แนะนำ</i> `<i>ซื้อ</i>` <i>ราคาพื้นฐาน</i> 4.80 <i>บาท</i></span></div>
</div>
<div id="sb" class="abs"><i style="top:6px;border-bottom:4px solid #404040"></i><div id="thumb"></div><i style="top:118px;border-top:4px solid #404040"></i></div>
<svg class="abs" style="left:0;top:120px;z-index:5" width="760" height="12" viewBox="0 120 760 12"><line x1="481" y1="126.5" x2="745" y2="126.5" stroke="#f08030" stroke-width="1.3"/></svg>
</body>
</html>
